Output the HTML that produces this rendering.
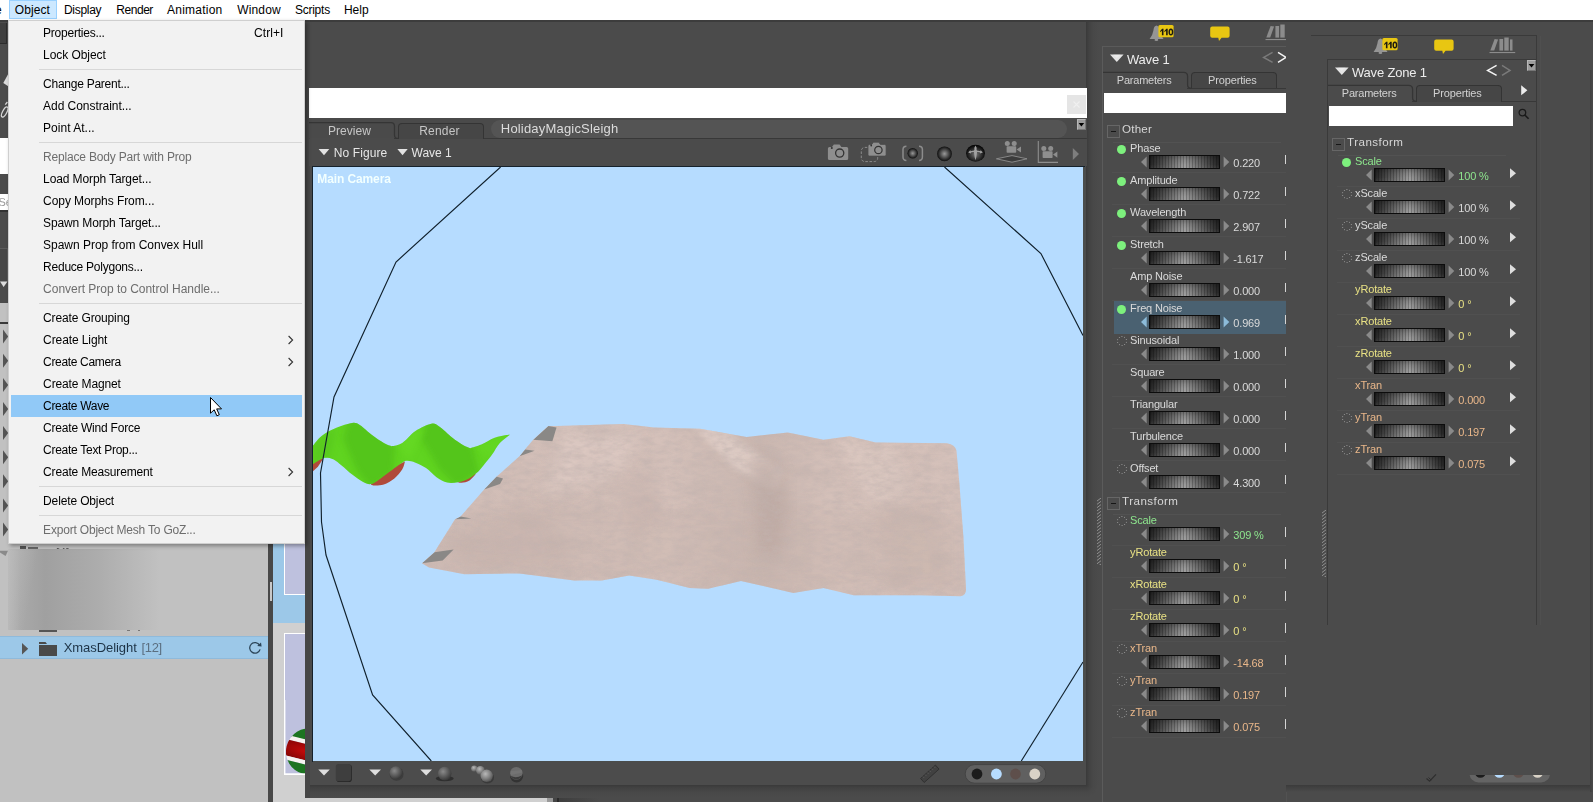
<!DOCTYPE html>
<html><head><meta charset="utf-8"><title>Poser</title>
<style>
html,body{margin:0;padding:0;}
body{width:1593px;height:802px;overflow:hidden;background:#4b4b4b;position:relative;font-family:"Liberation Sans",sans-serif;}
.a{position:absolute;display:block;}
.t{position:absolute;white-space:pre;line-height:1;}
</style></head><body>
<div class="a" style="left:0;top:0;width:1593px;height:802px;will-change:transform;">
<div class="a" style="left:0px;top:22.5px;width:7.2px;height:21.7px;background:#3e3e3e;box-sizing:border-box;border-right:1px solid #2c2c2c;border-bottom:1px solid #2c2c2c;"></div>
<svg class="a" style="left:0px;top:70px;" width="9" height="50" viewBox="0 0 9 50"><polygon points="8.2,4.1 3.3,13 8.2,16.2" fill="#dcdcdc"/><path d="M5.3 34.6 L7.4 32" stroke="#d8d8d8" stroke-width="1.3" fill="none"/><ellipse cx="4.7" cy="42" rx="2.1" ry="5.6" transform="rotate(28 4.7 42)" stroke="#d8d8d8" stroke-width="1.3" fill="none"/></svg>
<div class="a" style="left:0px;top:138px;width:9px;height:36px;background:#ffffff;"></div>
<div class="a" style="left:0px;top:194px;width:9px;height:16px;background:#ffffff;"></div>
<span class="t" style="left:-1.50px;top:196.69px;font-size:11px;color:#9a9a9a;">Se</span>
<div class="a" style="left:0px;top:210px;width:9px;height:2px;background:#333;"></div>
<div class="a" style="left:0px;top:247.7px;width:7.6px;height:33.2px;background:#474747;box-sizing:border-box;border-right:1px solid #5c5c5c;border-top:1px solid #5c5c5c;"></div>
<svg class="a" style="left:0px;top:280px;" width="9" height="9" viewBox="0 0 9 9"><polygon points="0,1.6 7.5,1.6 3.6,7" fill="#dcdcdc"/></svg>
<div class="a" style="left:0px;top:303px;width:9px;height:499px;background:#c1c1c1;"></div>
<div class="a" style="left:0px;top:322px;width:9px;height:2px;background:#3a3a3a;"></div>
<svg class="a" style="left:0px;top:303px;" width="9" height="499" viewBox="0 0 9 499"><polygon points="3,26.5 8.2,33.5 3,40.5" fill="#555"/><polygon points="3,50.7 8.2,57.7 3,64.7" fill="#555"/><polygon points="3,75 8.2,82 3,89" fill="#555"/><polygon points="3,99 8.2,106 3,113" fill="#555"/><polygon points="3,123 8.2,130 3,137" fill="#555"/><polygon points="3,147.2 8.2,154.2 3,161.2" fill="#555"/><polygon points="3,171.3 8.2,178.3 3,185.3" fill="#555"/><polygon points="3,195.4 8.2,202.4 3,209.4" fill="#555"/><polygon points="3,219.5 8.2,226.5 3,233.5" fill="#555"/></svg>
<div class="a" style="left:0px;top:543px;width:268px;height:259px;background:#c1c1c1;"></div>
<div class="a" style="left:20px;top:546.3px;width:6px;height:3px;background:#555;"></div>
<div class="a" style="left:28px;top:547.4px;width:9.5px;height:1.8px;background:#666;"></div>
<span class="t" style="left:56.00px;top:546.84px;font-size:12px;color:#555;">[4]</span>
<svg class="a" style="left:0px;top:548px;" width="9" height="10" viewBox="0 0 9 10"><polygon points="0,2.7 8,2.7 5.6,8 0,4.6" fill="#8a8a8a"/></svg>
<div class="a" style="left:39px;top:629.6px;width:18.2px;height:2.2px;background:#555;"></div>
<div class="a" style="left:127px;top:629.8px;width:2.6px;height:1.6px;background:#777;"></div>
<div class="a" style="left:137.5px;top:629.8px;width:2.6px;height:1.6px;background:#777;"></div>
<div class="a" style="left:8.2px;top:549px;width:160px;height:80.8px;background:linear-gradient(90deg,#b6b6b6 0px,#a9a9a9 12px,#a0a0a0 37px,#a7a7a7 67px,#adadad 92px,#b7b7b7 122px,#c1c1c1 152px);"></div>
<div class="a" style="left:8.2px;top:549px;width:160px;height:80.8px;background:linear-gradient(100deg,rgba(193,193,193,.5) 0px,rgba(193,193,193,0) 30px);"></div>
<div class="a" style="left:0px;top:636px;width:268px;height:23px;background:#9cc8e8;box-sizing:border-box;border-top:1px solid #8fbadb;border-bottom:1px solid #8fbadb;"></div>
<svg class="a" style="left:20px;top:641px;" width="12" height="16" viewBox="0 0 12 16"><polygon points="2,2 8.2,7.7 2,13.4" fill="#565656"/></svg>
<svg class="a" style="left:38px;top:640px;" width="22" height="18" viewBox="0 0 22 18"><path d="M1 2 h6.5 l1.5 2 h-8 z M1 5 h18 v11 h-18 z" fill="#4a4a4a"/></svg>
<span class="t" style="left:63.70px;top:641.00px;font-size:13px;color:#1d3346;letter-spacing:-0.064px;">XmasDelight</span>
<span class="t" style="left:141.50px;top:641.00px;font-size:13px;color:#5b6f80;letter-spacing:-0.321px;">[12]</span>
<svg class="a" style="left:246px;top:639px;" width="18" height="18" viewBox="0 0 18 18"><path d="M13.6 6.2 A5.3 5.3 0 1 0 14.1 10.4" stroke="#2c4558" stroke-width="1.3" fill="none"/><polygon points="11.2,6.9 15.6,7.6 15.0,3.4" fill="#2c4558"/></svg>
<div class="a" style="left:268px;top:543px;width:5px;height:259px;background:#484848;"></div>
<div class="a" style="left:270px;top:582px;width:1.5px;height:19px;background:#c8c8c8;"></div>
<div class="a" style="left:273px;top:543px;width:32px;height:259px;background:#d0d0d0;"></div>
<div class="a" style="left:273px;top:543px;width:32px;height:80px;background:#9cc8e8;"></div>
<div class="a" style="left:284px;top:543px;width:21px;height:51.5px;background:#bec1de;border-left:1px solid #fff;border-bottom:1px solid #fff;box-sizing:border-box;"></div>
<div class="a" style="left:284px;top:633px;width:21px;height:142px;background:#bec1de;border:1.4px solid #fff;border-right:none;box-sizing:border-box;"></div>
<svg class="a" style="left:284px;top:700px;" width="21" height="75" viewBox="0 0 21 75"><defs><clipPath id="orn"><ellipse cx="0" cy="0" rx="22.5" ry="23"/></clipPath><radialGradient id="orng" cx="45%" cy="45%" r="60%"><stop offset="0" stop-color="#c40a0a"/><stop offset="1" stop-color="#8a0606"/></radialGradient></defs><g transform="translate(24.5,51.5) rotate(14)"><g clip-path="url(#orn)"><rect x="-24" y="-24" width="48" height="14" fill="#1c7420"/><rect x="-24" y="-11" width="48" height="4.4" fill="#f6f2f0"/><rect x="-24" y="-6.6" width="48" height="16" fill="url(#orng)"/><rect x="-24" y="9.4" width="48" height="4" fill="#f6f2f0"/><rect x="-24" y="13.4" width="48" height="12" fill="#1c7420"/></g></g><rect x="0" y="0" width="1.4" height="75" fill="#fff"/><rect x="0" y="73.3" width="21" height="1.7" fill="#fff"/></svg>
<div class="a" style="left:305px;top:797px;width:242px;height:5px;background:#d0d0d0;"></div>
<div class="a" style="left:547px;top:797px;width:6px;height:5px;background:#9a9a9a;"></div>
<div class="a" style="left:553px;top:797px;width:4px;height:5px;background:#444;"></div>
<div class="a" style="left:557px;top:797px;width:2px;height:5px;background:#2a2a2a;"></div>
<div class="a" style="left:559px;top:797px;width:40px;height:5px;background:linear-gradient(90deg,#3e3e3e,#4b4b4b);"></div>
<div class="a" style="left:305px;top:22px;width:4.6px;height:775.6px;background:#464646;"></div>
<div class="a" style="left:1086.3px;top:22px;width:13px;height:764px;background:linear-gradient(90deg,#3a3a3a 0,#424242 3px,#484848 7px,#4b4b4b 13px);"></div>
<div class="a" style="left:309.6px;top:784.8px;width:776.7px;height:12.8px;background:linear-gradient(180deg,#3a3a3a 0,#424242 3px,#484848 7px,#4b4b4b 12px);"></div>
<div class="a" style="left:1086.3px;top:784.8px;width:12px;height:12px;background:radial-gradient(circle at 0 0,#3a3a3a 0,#424242 3px,#484848 7px,#4b4b4b 12px);"></div>
<div class="a" style="left:309px;top:88px;width:778px;height:30px;background:#ffffff;"></div>
<div class="a" style="left:1067px;top:95px;width:19px;height:19px;background:#e5e5e5;"></div>
<svg class="a" style="left:1067px;top:95px;" width="19" height="19" viewBox="0 0 19 19"><path d="M6.5 6.5 L12.5 12.5 M12.5 6.5 L6.5 12.5" stroke="#f0f0f0" stroke-width="1.1"/></svg>
<div class="a" style="left:309px;top:118px;width:778px;height:20px;background:#4a4a4a;"></div>
<div class="a" style="left:490.5px;top:120px;width:576px;height:17.5px;background:#545454;border-radius:9px;"></div>
<span class="t" style="left:500.80px;top:122.00px;font-size:13px;color:#dcdcdc;letter-spacing:0.190px;">HolidayMagicSleigh</span>
<div class="a" style="left:394px;top:138px;width:692px;height:1px;background:#383838;"></div>
<svg class="a" style="left:309px;top:120px;" width="90" height="20" viewBox="0 0 90 20"><path d="M0 2.6 H82 Q85.5 2.6 85.5 6.2 V15 Q85.5 18.5 89 18.5" fill="none" stroke="#353535" stroke-width="1.3"/></svg>
<span class="t" style="left:327.90px;top:124.84px;font-size:12px;color:#c6c6c6;letter-spacing:0.046px;">Preview</span>
<div class="a" style="left:398px;top:122.5px;width:86px;height:16px;background:#464646;box-sizing:border-box;border:1px solid #343434;border-bottom:none;border-radius:4px 4px 0 0;"></div>
<span class="t" style="left:419.20px;top:124.84px;font-size:12px;color:#c6c6c6;letter-spacing:0.190px;">Render</span>
<div class="a" style="left:1077px;top:119px;width:8.5px;height:10.5px;background:#9c9c9c;box-sizing:border-box;border:1px solid #b8b8b8;border-right-color:#777;border-bottom-color:#777;"></div>
<svg class="a" style="left:1077px;top:119px;" width="9" height="11" viewBox="0 0 9 11"><polygon points="1.6,4 7.2,4 4.4,7.6" fill="#000"/></svg>
<div class="a" style="left:309px;top:139px;width:778px;height:27px;background:#4b4b4b;"></div>
<svg class="a" style="left:316px;top:145px;" width="16" height="14" viewBox="0 0 16 14"><polygon points="2.6,4 13.3,4 8,10.2" fill="#e2e2e2"/></svg>
<span class="t" style="left:333.80px;top:146.84px;font-size:12px;color:#e6e6e6;letter-spacing:0.090px;">No Figure</span>
<svg class="a" style="left:395px;top:145px;" width="16" height="14" viewBox="0 0 16 14"><polygon points="2.4,4 12.7,4 7.5,10.2" fill="#e2e2e2"/></svg>
<span class="t" style="left:411.60px;top:146.84px;font-size:12px;color:#e6e6e6;letter-spacing:-0.039px;">Wave 1</span>
<svg class="a" style="left:820px;top:139px;" width="266" height="27" viewBox="0 0 266 27">
<defs>
<radialGradient id="sph" cx="50%" cy="50%" r="50%"><stop offset="0" stop-color="#9a9a9a"/><stop offset=".45" stop-color="#5a5a5a"/><stop offset="1" stop-color="#0e0e0e"/></radialGradient>
<radialGradient id="sph2" cx="50%" cy="55%" r="52%"><stop offset="0" stop-color="#7a7a7a"/><stop offset=".5" stop-color="#3c3c3c"/><stop offset="1" stop-color="#060606"/></radialGradient>
<filter id="icb"><feGaussianBlur stdDeviation="0.35"/></filter>
</defs>
<!-- camera 1 -->
<g fill="#8e8e8e">
<path d="M9.5 8 H12 L13.8 5.6 H19.6 L21.4 8 H26.6 Q28.2 8 28.2 9.6 V19.4 Q28.2 21 26.6 21 H9.5 Q7.9 21 7.9 19.4 V9.6 Q7.9 8 9.5 8 Z"/>
</g>
<circle cx="19.7" cy="14.1" r="4.1" fill="#8e8e8e" stroke="#333" stroke-width="1.3"/>
<circle cx="11.8" cy="9.1" r="1" fill="#333"/>
<!-- camera 2 w/ dashed -->
<rect x="41.3" y="8.4" width="16.4" height="14.2" rx="3.5" fill="none" stroke="#8a8a8a" stroke-width="1" stroke-dasharray="2.6 1.6"/>
<path d="M49.5 5.4 H51.8 L53.4 3.2 H58.8 L60.4 5.4 H64.6 Q66.1 5.4 66.1 6.9 V15.6 Q66.1 17.1 64.6 17.1 H49.5 Q48 17.1 48 15.6 V6.9 Q48 5.4 49.5 5.4 Z" fill="#8e8e8e" stroke="#4b4b4b" stroke-width=".8"/>
<circle cx="58.4" cy="11" r="3.7" fill="#8e8e8e" stroke="#333" stroke-width="1.2"/>
<circle cx="51.2" cy="6.5" r=".9" fill="#333"/>
<!-- bracket sphere -->
<path d="M86.4 7.2 Q83 7.2 83 10.5 V18 Q83 21.4 86.4 21.4" fill="none" stroke="#8c8c8c" stroke-width="1.5"/>
<path d="M99 7.2 Q102.4 7.2 102.4 10.5 V18 Q102.4 21.4 99 21.4" fill="none" stroke="#8c8c8c" stroke-width="1.5"/>
<circle cx="92.7" cy="14.3" r="5.2" fill="url(#sph)"/>
<!-- sphere -->
<circle cx="124.5" cy="14.8" r="7.4" fill="url(#sph)"/>
<!-- sphere with arrows -->
<ellipse cx="155.5" cy="14.3" rx="9.5" ry="8.5" fill="url(#sph2)"/>
<g fill="#a2a2a2" filter="url(#icb)">
<path d="M155.5 6.6 L157 9.4 L156.3 9.4 Q157.2 12 157 13.4 Q156.6 17.6 155.5 21.2 Q154.4 17.6 154 13.4 Q153.8 12 154.7 9.4 L154 9.4 Z"/>
<path d="M148.2 13.6 L150.6 11 L150.4 12.2 Q155.5 10.6 160.6 12.2 L160.4 11 L162.8 13.6 L159.8 14.4 L160.2 13.4 Q155.5 12.2 150.8 13.4 L151.2 14.4 Z"/>
</g>
<!-- movie camera over diamond -->
<g fill="#8e8e8e">
<circle cx="187.3" cy="4.6" r="2.5"/><circle cx="194.2" cy="4.6" r="2.5"/>
<rect x="186.6" y="7.2" width="9.6" height="6.6" rx=".8"/>
<polygon points="196.6,10.5 201,7.4 201,13.6"/>
</g>
<polygon points="176.4,19.8 192,16.6 207,19.8 192,23.2" fill="#3c3c3c" stroke="#8e8e8e" stroke-width=".9"/>
<!-- L + movie camera -->
<path d="M218.3 2 V23.4 H238" fill="none" stroke="#8e8e8e" stroke-width="1.1"/>
<g fill="#8e8e8e">
<circle cx="223.8" cy="9.6" r="2.5"/><circle cx="230.7" cy="9.6" r="2.5"/>
<rect x="222.6" y="12.2" width="10" height="6.8" rx=".8"/>
<polygon points="233,15.6 237.4,12.4 237.4,18.8"/>
</g>
<!-- right arrow -->
<polygon points="252.8,9 259,15 252.8,21" fill="#7e7e7e"/>
</svg>
<div class="a" style="left:311.5px;top:165.5px;width:773px;height:597px;background:#4a4d4c;box-sizing:border-box;border-top:1.4px solid #16222c;border-left:1.4px solid #16222c;"></div>
<svg class="a" style="left:313px;top:167px;" width="770" height="594" viewBox="0 0 770 594">
<defs>
<linearGradient id="tg" x1="0" y1="0" x2="1" y2="0">
 <stop offset="0" stop-color="#d0bcb5"/><stop offset=".45" stop-color="#d5c1ba"/><stop offset=".62" stop-color="#c9b6af"/><stop offset=".75" stop-color="#d4c0b9"/><stop offset="1" stop-color="#d5c1ba"/>
</linearGradient>
<linearGradient id="gg" x1="0" y1="0" x2="0" y2="1"><stop offset="0" stop-color="#66dc22"/><stop offset="1" stop-color="#4fbf18"/></linearGradient>
<filter id="bl" x="-20%" y="-20%" width="140%" height="140%"><feGaussianBlur stdDeviation="7"/></filter>
<filter id="bl2" x="-20%" y="-20%" width="140%" height="140%"><feGaussianBlur stdDeviation="3"/></filter>
<filter id="tex" x="0" y="0" width="100%" height="100%">
 <feTurbulence type="fractalNoise" baseFrequency="0.1 0.24" numOctaves="3" seed="7" result="n"/>
 <feColorMatrix in="n" type="matrix" values="0 0 0 0 0.55  0 0 0 0 0.46  0 0 0 0 0.44  1.4 1.4 0 0 -1.15"/>
 <feComposite in2="SourceGraphic" operator="in"/>
</filter>
<filter id="tex2" x="0" y="0" width="100%" height="100%">
 <feTurbulence type="fractalNoise" baseFrequency="0.03 0.07" numOctaves="2" seed="3" result="n"/>
 <feColorMatrix in="n" type="matrix" values="0 0 0 0 0.5  0 0 0 0 0.42  0 0 0 0 0.4  1.6 1.6 0 0 -1.45"/>
 <feComposite in2="SourceGraphic" operator="in"/>
</filter>
<clipPath id="tc"><path id="tp" d="M235.3 259 L243.5 259 L310.7 257.1 L341 260.4 L387 261.8 L433.6 270 L474.8 265.4 L510.5 272.8 L536.5 269.2 L562.6 275.5 L634 276.3 Q642 277.5 643.5 283.8 L646.3 315.3 L650.4 370.2 L653 422.3 Q653 428.5 647.6 429.2 L606.5 428.3 L540.6 428.3 L510.5 421 L480.3 425.9 L428 414 L395.2 421.8 L376.6 421 L343.7 412.7 L316.2 408.6 L288.8 413.5 L261.3 413.5 L206.5 406.4 L151.6 407.2 L116 400.4 L109 396.2 L121.4 385.3 L142 352.3 L147.5 349.6 L171.4 322.2 L184 309.3 L206.5 289.2 L212 282.4 L220.2 272.8 Z"/></clipPath>
</defs>
<rect width="770" height="594" fill="#b6dcff"/>
<!-- green wave -->
<path d="M0 304.3 L4.9 299.7 L10.2 291.8 L5 291 L0 295 Z" fill="#b04a3a"/>
<path d="M57.6 317.1 C58.0 317.3 58.1 318.3 60.3 318.4 C62.5 318.5 67.3 318.6 70.8 317.5 C74.3 316.4 78.3 314.0 81.4 311.5 C84.5 309.0 87.5 305.1 89.3 302.3 C91.1 299.5 91.5 295.8 92.0 294.5 L80 300 Z" fill="#b04a3a"/>
<path d="M144.6 315.2 C145.3 315.3 146.6 316.1 148.6 315.8 C150.6 315.5 154.0 315.1 156.5 313.5 C159.0 311.9 162.2 307.5 163.4 306.3 L155 309 Z" fill="#b04a3a"/>
<clipPath id="wc"><path id="wp" d="M0.0 278.6 C1.5 277.0 5.0 271.7 8.9 268.7 C12.8 265.7 18.3 262.9 23.4 260.8 C28.4 258.7 35.2 256.3 39.2 255.9 C43.2 255.5 43.8 256.2 47.1 258.2 C50.4 260.2 55.0 265.0 59.0 268.0 C63.0 271.0 67.5 274.1 70.8 276.0 C74.1 277.9 77.4 278.8 78.7 279.3 C80.5 278.8 85.3 278.5 89.3 276.0 C93.3 273.5 97.7 267.3 102.5 264.1 C107.3 260.9 114.3 257.6 118.3 256.8 C122.2 256.0 122.7 257.2 126.2 259.5 C129.7 261.8 135.5 267.6 139.4 270.7 C143.3 273.8 146.9 276.1 149.9 277.9 C152.9 279.6 156.0 280.6 157.2 281.2 C159.1 280.6 164.3 279.2 168.4 277.5 C172.5 275.8 176.8 272.4 181.6 270.7 C186.4 269.0 194.8 267.9 197.4 267.4 C195.6 268.8 189.9 272.6 186.8 276.0 C183.7 279.4 182.0 283.6 178.9 287.8 C175.8 292.0 171.0 297.9 168.4 301.0 C165.8 304.1 165.3 304.5 163.1 306.3 C160.9 308.1 158.1 310.5 155.0 312.0 C151.9 313.5 148.1 314.6 144.6 315.2 C141.1 315.8 137.6 316.3 134.1 315.5 C130.6 314.7 127.0 312.6 123.5 310.2 C120.0 307.8 116.5 303.4 113.0 301.0 C109.5 298.6 105.6 296.9 102.5 295.7 C99.4 294.5 96.7 293.8 94.5 293.8 C92.3 293.8 92.4 293.8 89.3 295.7 C86.2 297.6 80.1 302.1 76.1 305.0 C72.1 307.9 68.6 310.9 65.5 312.9 C62.4 314.9 60.2 316.8 57.6 317.1 C55.0 317.4 52.8 316.4 49.7 314.8 C46.6 313.2 42.7 310.3 39.2 307.6 C35.7 304.9 31.7 300.9 28.6 298.4 C25.5 295.9 23.3 293.7 20.7 292.4 C18.1 291.1 15.0 290.7 12.8 290.7 C10.6 290.7 9.6 291.3 7.5 292.4 C5.4 293.4 1.2 296.2 0.0 297.0 Z"/></clipPath>
<use href="#wp" fill="#60d420"/>
<g clip-path="url(#wc)">
 <path d="M36 250 L50 256 L82 279 L80 306 L58 322 L44 304 L30 272 Z" fill="#4ab616" opacity=".5" filter="url(#bl2)"/>
 <path d="M115 250 L129 256 L160 281 L166 306 L144 320 L126 302 L108 272 Z" fill="#4ab616" opacity=".5" filter="url(#bl2)"/>
 <path d="M0 276 L24 260 L16 292 L0 300 Z" fill="#52c21a" opacity=".5" filter="url(#bl2)"/>
 <path d="M84 276 L104 262 L112 262 L96 294 Z" fill="#6ade26" opacity=".45" filter="url(#bl2)"/>
 <path d="M162 280 L198 266 L178 292 Z" fill="#6ade26" opacity=".35" filter="url(#bl2)"/>
</g>
<!-- terrain -->
<use href="#tp" fill="url(#tg)"/>
<g clip-path="url(#tc)">
 <path d="M109 396 L300 410 L653 428 L653 350 L400 345 L200 335 Z" fill="#cab6af" opacity=".4" filter="url(#bl)"/>
 <path d="M380 258 L410 262 L470 305 L462 325 L420 300 Z" fill="#e3d1ca" opacity=".8" filter="url(#bl2)"/>
 <path d="M436 290 L466 296 L476 340 L468 390 L442 384 L446 340 Z" fill="#b9a59f" opacity=".6" filter="url(#bl)"/>
 <path d="M250 262 L330 266 L300 310 L230 330 Z" fill="#decbc4" opacity=".7" filter="url(#bl)"/>
 <path d="M300 315 L340 300 L350 350 L320 372 Z" fill="#c4b0aa" opacity=".45" filter="url(#bl)"/>
 <path d="M520 270 L580 278 L600 330 L560 340 Z" fill="#dfccc5" opacity=".55" filter="url(#bl)"/>
 <path d="M560 340 L620 330 L640 420 L580 425 Z" fill="#c7b3ac" opacity=".45" filter="url(#bl)"/>
 <path d="M130 370 L230 340 L260 400 L150 404 Z" fill="#c5b1aa" opacity=".45" filter="url(#bl)"/>
 <rect x="100" y="250" width="560" height="185" fill="#fff" filter="url(#tex)" opacity=".6"/>
 <rect x="100" y="250" width="560" height="185" fill="#fff" filter="url(#tex2)" opacity=".3"/>
 <!-- grey edge bits -->
 <path d="M235.3 259 L243.5 260.4 L239.4 274.2 L220.2 272.8 Z" fill="#8a8886"/>
 <path d="M206.5 289.2 L212 282.4 L221.6 283.8 Z" fill="#8a8886"/>
 <path d="M171 322.4 L183 309.5 L190 311.5 L187 317 Z" fill="#8a8886"/>
 <path d="M142 352.3 L147.5 349.6 L158.5 351.5 Z" fill="#8a8886"/>
 <path d="M109 396.2 L121.4 385.3 L140.6 382.5 L129.7 393.5 Z" fill="#8a8886"/>
</g>
<!-- camera frustum polyline -->
<polyline points="187.6,0 83,95 21,230 7.5,306 8.5,355 13,388 59.6,528 118.3,594" fill="none" stroke="#10202c" stroke-width="1.15"/>
<polyline points="631.5,0 727.9,86.5 770,168.4" fill="none" stroke="#10202c" stroke-width="1.15"/>
<polyline points="770,495 708.3,594" fill="none" stroke="#10202c" stroke-width="1.15"/>
</svg>
<span class="t" style="left:317.30px;top:172.84px;font-size:12px;color:#f2ffff;letter-spacing:-0.109px;font-weight:bold;">Main Camera</span>
<div class="a" style="left:309.5px;top:761.5px;width:776.8px;height:23.3px;background:#4c4c4c;"></div>
<svg class="a" style="left:309px;top:761.5px;" width="777" height="23.5" viewBox="0 0 777 23.5">
<defs>
<radialGradient id="bs" cx="38%" cy="35%" r="65%"><stop offset="0" stop-color="#8a8a8a"/><stop offset=".6" stop-color="#5a5a5a"/><stop offset="1" stop-color="#3a3a3a"/></radialGradient>
<radialGradient id="bs2" cx="40%" cy="35%" r="65%"><stop offset="0" stop-color="#b8b8b8"/><stop offset=".6" stop-color="#808080"/><stop offset="1" stop-color="#555"/></radialGradient>
</defs>
<polygon points="9.3,7.5 20.8,7.5 15,13.6" fill="#dedede"/>
<rect x="27.4" y="2.6" width="15.4" height="17.4" rx="2.8" fill="#262626"/><rect x="26.8" y="2" width="15.2" height="17.2" rx="2.6" fill="#3e3e3e"/>
<polygon points="60.3,7.5 72,7.5 66.2,13.6" fill="#dedede"/>
<ellipse cx="87.6" cy="12" rx="7" ry="6.8" fill="#3c3c3c"/>
<circle cx="87" cy="10.8" r="6.5" fill="url(#bs)"/>
<polygon points="111.3,7.5 123,7.5 117.2,13.6" fill="#dedede"/>
<ellipse cx="135.7" cy="16.6" rx="9" ry="2.6" fill="#2e2e2e"/>
<circle cx="135.7" cy="11.6" r="6.8" fill="url(#bs)"/>
<circle cx="165.3" cy="6.6" r="3.2" fill="url(#bs2)"/>
<circle cx="171.4" cy="8.3" r="4.4" fill="url(#bs2)"/>
<ellipse cx="178.4" cy="15.5" rx="6.6" ry="6" fill="#3a3a3a"/>
<circle cx="177.7" cy="13.8" r="6.2" fill="url(#bs2)"/>
<ellipse cx="207.6" cy="14" rx="6.6" ry="6.4" fill="#333"/>
<circle cx="207.3" cy="11.2" r="6.3" fill="#6c6c6c"/>
<path d="M201.6 13.8 A6.3 6.3 0 0 0 213.2 13.2 Q207 17 201.6 13.8 Z" fill="#3c3c3c"/><path d="M202 9 L212.6 8 L213.4 10.6 L202 13 Z" fill="#7a7a7a" opacity=".6"/>
<!-- ruler -->
<g transform="translate(620.8,11.8) rotate(-42)"><rect x="-10" y="-2.7" width="20" height="5.4" fill="#414141" stroke="#303030" stroke-width=".9"/><path d="M-7 -2.6 v2 M-4 -2.6 v2 M-1 -2.6 v2 M2 -2.6 v2 M5 -2.6 v2 M8 -2.6 v2" stroke="#5a5a5a" stroke-width=".8"/></g>
<!-- colour pill -->
<rect x="656.2" y="2.6" width="80.6" height="18.6" rx="9.3" fill="#606060" stroke="#444" stroke-width="1"/>
<circle cx="668" cy="12" r="5.4" fill="#1c1c1c"/>
<circle cx="687.4" cy="12" r="5.4" fill="#b6dcff"/>
<circle cx="706.5" cy="12" r="5.4" fill="#5e4f4b"/>
<circle cx="725.8" cy="12" r="5.4" fill="#d9d2c6"/>
</svg>
<div class="a" style="left:0;top:0;width:1286.2px;height:802px;overflow:hidden;">
<div class="a" style="left:1101.8px;top:46px;width:1.1px;height:756px;background:#5b5b5b;"></div>
<svg class="a" style="left:1144.5px;top:23.8px;" width="150" height="20" viewBox="0 0 150 20">
<path d="M4.6 14.9 Q7.4 12 8.4 6.4 Q9 1.8 11.5 1.5 Q14 1.8 14.6 6.4 Q15.6 12 18.5 14.9 Z" fill="#959595"/>
<ellipse cx="11.4" cy="15.9" rx="1.9" ry="1.1" fill="#959595"/>
<rect x="13.4" y="0.9" width="15.2" height="12.3" rx="1.5" fill="#e8c612"/>
<g fill="#1c1a10">
<path d="M15.2 7 L17.1 4.7 H18.5 V11.3 H16.9 V6.8 L15.2 8.3 Z"/>
<path d="M19.4 7 L21.3 4.7 H22.7 V11.3 H21.1 V6.8 L19.4 8.3 Z"/>
<path fill-rule="evenodd" d="M25.9 4.6 C27.5 4.6 28.3 5.9 28.3 8 C28.3 10.1 27.5 11.4 25.9 11.4 C24.3 11.4 23.5 10.1 23.5 8 C23.5 5.9 24.3 4.6 25.9 4.6 Z M25.9 5.9 C25.2 5.9 25 6.7 25 8 C25 9.3 25.2 10.1 25.9 10.1 C26.6 10.1 26.8 9.3 26.8 8 C26.8 6.7 26.6 5.9 25.9 5.9 Z"/>
</g>
<path d="M67.2 2.5 H82.6 Q84.6 2.5 84.6 4.5 V11.8 Q84.6 13.8 82.6 13.8 H76.6 L74 16.9 L73.3 13.8 H67.2 Q65.2 13.8 65.2 11.8 V4.5 Q65.2 2.5 67.2 2.5 Z" fill="#e8c612"/>
<g fill="#8c8c8c">
<polygon points="121.3,13.6 125.6,2 129.1,2.6 125.2,13.6"/>
<rect x="130.4" y="2" width="3.7" height="11.6"/>
<rect x="135.3" y="0.5" width="4.4" height="13.1"/>
<rect x="141" y="2.4" width="2.5" height="11.2"/>
<rect x="120.5" y="15" width="25.7" height="1.1"/>
</g>
</svg>
<div class="a" style="left:1102.5px;top:46px;width:190px;height:1.2px;background:#5a5a5a;"></div>
<svg class="a" style="left:1108px;top:52px;" width="18" height="12" viewBox="0 0 18 12"><polygon points="2,2.4 15.6,2.4 8.8,10" fill="#e4e4e4"/><polygon points="5,2.4 12.6,2.4 8.8,6" fill="#fff" opacity=".3"/></svg>
<span class="t" style="left:1126.90px;top:52.70px;font-size:13px;color:#ececec;letter-spacing:-0.17px;">Wave 1</span>
<svg class="a" style="left:1260px;top:50px;" width="30" height="15" viewBox="0 0 30 15"><polyline points="12.6,2.4 3.6,7.4 12.6,12.4" fill="none" stroke="#7a7a7a" stroke-width="1.5"/><polyline points="18,2.4 26,7.4 18,12.4" fill="none" stroke="#f4f4f4" stroke-width="1.5"/></svg>
<div class="a" style="left:1102.5px;top:88px;width:190px;height:1px;background:#383838;"></div>
<svg class="a" style="left:1102.5px;top:70px;" width="92" height="21" viewBox="0 0 92 21"><rect x="0" y="2.6" width="84" height="16.4" fill="#4b4b4b"/><rect x="84" y="12" width="2" height="6" fill="#4b4b4b"/><path d="M0 2.3 H80.6 Q84.6 2.3 84.6 6.3 V15 Q84.6 18.4 88.4 18.4" fill="none" stroke="#353535" stroke-width="1.3"/></svg>
<span class="t" style="left:1116.80px;top:74.69px;font-size:11px;color:#d2d2d2;letter-spacing:-0.216px;">Parameters</span>
<div class="a" style="left:1191px;top:71.8px;width:85.5px;height:16.7px;background:#464646;box-sizing:border-box;border:1px solid #343434;border-bottom:none;border-radius:4px 4px 0 0;"></div>
<span class="t" style="left:1208.10px;top:74.69px;font-size:11px;color:#d2d2d2;letter-spacing:-0.164px;">Properties</span>
<div class="a" style="left:1103.8px;top:93px;width:184px;height:20px;background:#ffffff;"></div>
<div class="a" style="left:1107px;top:125.2px;width:12.9px;height:12.4px;background:#4b4b4b;box-sizing:border-box;border:1px solid #666;"></div>
<div class="a" style="left:1111px;top:131.1px;width:5.2px;height:1.2px;background:#161616;"></div>
<span class="t" style="left:1122.10px;top:122.98px;font-size:11.6px;color:#d6d6d6;letter-spacing:0.178px;">Other</span>
<div class="a" style="left:1113px;top:142px;width:168px;height:1px;background:#525252;"></div>
<div class="a" style="left:1116.6px;top:144.5px;width:9.6px;height:9.6px;border-radius:50%;background:#7df07d;"></div>
<span class="t" style="left:1130.10px;top:142.79px;font-size:11px;color:#dadada;letter-spacing:-0.17px;">Phase</span>
<svg class="a" style="left:1139.5px;top:154px" width="92" height="16" viewBox="0 0 92 16"><polygon points="1,8 6.7,2.6 6.7,13.4" fill="#8a8a8a"/><polygon points="83.6,2.6 89.3,8 83.6,13.4" fill="#8a8a8a"/></svg><div class="a" style="left:1148.5px;top:155px;width:71.6px;height:14px;box-sizing:border-box;border:1px solid #0c0c0c;background:repeating-linear-gradient(90deg,rgba(0,0,0,.22) 0,rgba(0,0,0,.22) 1px,rgba(0,0,0,0) 1px,rgba(0,0,0,0) 3px),linear-gradient(180deg,rgba(0,0,0,.28) 0%,rgba(0,0,0,.1) 35%,rgba(0,0,0,0) 70%,rgba(255,255,255,.06) 100%),linear-gradient(90deg,#242424 0%,#3a3a3a 10%,#6a6a6a 30%,#9a9a9a 50%,#6c6c6c 70%,#3a3a3a 90%,#242424 100%);"></div>
<span class="t" style="left:1233.30px;top:157.99px;font-size:11px;color:#dadada;letter-spacing:-0.17px;">0.220</span>
<div class="a" style="left:1285.1px;top:154.8px;width:1.2px;height:9.6px;background:#d4d4d4;"></div>
<div class="a" style="left:1111.5px;top:172.4px;width:183px;height:1px;background:#505050;"></div>
<div class="a" style="left:1116.6px;top:176.5px;width:9.6px;height:9.6px;border-radius:50%;background:#7df07d;"></div>
<span class="t" style="left:1130.10px;top:174.79px;font-size:11px;color:#dadada;letter-spacing:-0.17px;">Amplitude</span>
<svg class="a" style="left:1139.5px;top:186px" width="92" height="16" viewBox="0 0 92 16"><polygon points="1,8 6.7,2.6 6.7,13.4" fill="#8a8a8a"/><polygon points="83.6,2.6 89.3,8 83.6,13.4" fill="#8a8a8a"/></svg><div class="a" style="left:1148.5px;top:187px;width:71.6px;height:14px;box-sizing:border-box;border:1px solid #0c0c0c;background:repeating-linear-gradient(90deg,rgba(0,0,0,.22) 0,rgba(0,0,0,.22) 1px,rgba(0,0,0,0) 1px,rgba(0,0,0,0) 3px),linear-gradient(180deg,rgba(0,0,0,.28) 0%,rgba(0,0,0,.1) 35%,rgba(0,0,0,0) 70%,rgba(255,255,255,.06) 100%),linear-gradient(90deg,#242424 0%,#3a3a3a 10%,#6a6a6a 30%,#9a9a9a 50%,#6c6c6c 70%,#3a3a3a 90%,#242424 100%);"></div>
<span class="t" style="left:1233.30px;top:189.99px;font-size:11px;color:#dadada;letter-spacing:-0.17px;">0.722</span>
<div class="a" style="left:1285.1px;top:186.8px;width:1.2px;height:9.6px;background:#d4d4d4;"></div>
<div class="a" style="left:1111.5px;top:204.4px;width:183px;height:1px;background:#505050;"></div>
<div class="a" style="left:1116.6px;top:208.5px;width:9.6px;height:9.6px;border-radius:50%;background:#7df07d;"></div>
<span class="t" style="left:1130.10px;top:206.79px;font-size:11px;color:#dadada;letter-spacing:-0.17px;">Wavelength</span>
<svg class="a" style="left:1139.5px;top:218px" width="92" height="16" viewBox="0 0 92 16"><polygon points="1,8 6.7,2.6 6.7,13.4" fill="#8a8a8a"/><polygon points="83.6,2.6 89.3,8 83.6,13.4" fill="#8a8a8a"/></svg><div class="a" style="left:1148.5px;top:219px;width:71.6px;height:14px;box-sizing:border-box;border:1px solid #0c0c0c;background:repeating-linear-gradient(90deg,rgba(0,0,0,.22) 0,rgba(0,0,0,.22) 1px,rgba(0,0,0,0) 1px,rgba(0,0,0,0) 3px),linear-gradient(180deg,rgba(0,0,0,.28) 0%,rgba(0,0,0,.1) 35%,rgba(0,0,0,0) 70%,rgba(255,255,255,.06) 100%),linear-gradient(90deg,#242424 0%,#3a3a3a 10%,#6a6a6a 30%,#9a9a9a 50%,#6c6c6c 70%,#3a3a3a 90%,#242424 100%);"></div>
<span class="t" style="left:1233.30px;top:221.99px;font-size:11px;color:#dadada;letter-spacing:-0.17px;">2.907</span>
<div class="a" style="left:1285.1px;top:218.8px;width:1.2px;height:9.6px;background:#d4d4d4;"></div>
<div class="a" style="left:1111.5px;top:236.4px;width:183px;height:1px;background:#505050;"></div>
<div class="a" style="left:1116.6px;top:240.5px;width:9.6px;height:9.6px;border-radius:50%;background:#7df07d;"></div>
<span class="t" style="left:1130.10px;top:238.79px;font-size:11px;color:#dadada;letter-spacing:-0.17px;">Stretch</span>
<svg class="a" style="left:1139.5px;top:250px" width="92" height="16" viewBox="0 0 92 16"><polygon points="1,8 6.7,2.6 6.7,13.4" fill="#8a8a8a"/><polygon points="83.6,2.6 89.3,8 83.6,13.4" fill="#8a8a8a"/></svg><div class="a" style="left:1148.5px;top:251px;width:71.6px;height:14px;box-sizing:border-box;border:1px solid #0c0c0c;background:repeating-linear-gradient(90deg,rgba(0,0,0,.22) 0,rgba(0,0,0,.22) 1px,rgba(0,0,0,0) 1px,rgba(0,0,0,0) 3px),linear-gradient(180deg,rgba(0,0,0,.28) 0%,rgba(0,0,0,.1) 35%,rgba(0,0,0,0) 70%,rgba(255,255,255,.06) 100%),linear-gradient(90deg,#242424 0%,#3a3a3a 10%,#6a6a6a 30%,#9a9a9a 50%,#6c6c6c 70%,#3a3a3a 90%,#242424 100%);"></div>
<span class="t" style="left:1233.30px;top:253.99px;font-size:11px;color:#dadada;letter-spacing:-0.17px;">-1.617</span>
<div class="a" style="left:1285.1px;top:250.8px;width:1.2px;height:9.6px;background:#d4d4d4;"></div>
<div class="a" style="left:1111.5px;top:268.4px;width:183px;height:1px;background:#505050;"></div>

<span class="t" style="left:1130.10px;top:270.79px;font-size:11px;color:#dadada;letter-spacing:-0.17px;">Amp Noise</span>
<svg class="a" style="left:1139.5px;top:282px" width="92" height="16" viewBox="0 0 92 16"><polygon points="1,8 6.7,2.6 6.7,13.4" fill="#8a8a8a"/><polygon points="83.6,2.6 89.3,8 83.6,13.4" fill="#8a8a8a"/></svg><div class="a" style="left:1148.5px;top:283px;width:71.6px;height:14px;box-sizing:border-box;border:1px solid #0c0c0c;background:repeating-linear-gradient(90deg,rgba(0,0,0,.22) 0,rgba(0,0,0,.22) 1px,rgba(0,0,0,0) 1px,rgba(0,0,0,0) 3px),linear-gradient(180deg,rgba(0,0,0,.28) 0%,rgba(0,0,0,.1) 35%,rgba(0,0,0,0) 70%,rgba(255,255,255,.06) 100%),linear-gradient(90deg,#242424 0%,#3a3a3a 10%,#6a6a6a 30%,#9a9a9a 50%,#6c6c6c 70%,#3a3a3a 90%,#242424 100%);"></div>
<span class="t" style="left:1233.30px;top:285.99px;font-size:11px;color:#dadada;letter-spacing:-0.17px;">0.000</span>
<div class="a" style="left:1285.1px;top:282.8px;width:1.2px;height:9.6px;background:#d4d4d4;"></div>
<div class="a" style="left:1111.5px;top:300.4px;width:183px;height:1px;background:#505050;"></div>
<div class="a" style="left:1114.2px;top:300.6px;width:176px;height:33.5px;background:#4a6171;"></div>
<div class="a" style="left:1116.6px;top:304.5px;width:9.6px;height:9.6px;border-radius:50%;background:#7df07d;"></div>
<span class="t" style="left:1130.10px;top:302.79px;font-size:11px;color:#dadada;letter-spacing:-0.17px;">Freq Noise</span>
<svg class="a" style="left:1139.5px;top:314px" width="92" height="16" viewBox="0 0 92 16"><polygon points="1,8 6.7,2.6 6.7,13.4" fill="#8cbbd9"/><polygon points="83.6,2.6 89.3,8 83.6,13.4" fill="#8cbbd9"/></svg><div class="a" style="left:1148.5px;top:315px;width:71.6px;height:14px;box-sizing:border-box;border:1px solid #0c0c0c;background:repeating-linear-gradient(90deg,rgba(0,0,0,.22) 0,rgba(0,0,0,.22) 1px,rgba(0,0,0,0) 1px,rgba(0,0,0,0) 3px),linear-gradient(180deg,rgba(0,0,0,.28) 0%,rgba(0,0,0,.1) 35%,rgba(0,0,0,0) 70%,rgba(255,255,255,.06) 100%),linear-gradient(90deg,#242424 0%,#3a3a3a 10%,#6a6a6a 30%,#9a9a9a 50%,#6c6c6c 70%,#3a3a3a 90%,#242424 100%);"></div>
<span class="t" style="left:1233.30px;top:317.99px;font-size:11px;color:#dadada;letter-spacing:-0.17px;">0.969</span>
<div class="a" style="left:1285.1px;top:314.8px;width:1.2px;height:9.6px;background:#d4d4d4;"></div>
<svg class="a" style="left:1115.9px;top:335px" width="12" height="12" viewBox="0 0 12 12"><g fill="#c8c8c8"><circle cx="10.30" cy="7.33" r="0.48"/><circle cx="8.70" cy="9.60" r="0.48"/><circle cx="6.06" cy="10.50" r="0.48"/><circle cx="3.41" cy="9.68" r="0.48"/><circle cx="1.74" cy="7.45" r="0.48"/><circle cx="1.70" cy="4.67" r="0.48"/><circle cx="3.30" cy="2.40" r="0.48"/><circle cx="5.94" cy="1.50" r="0.48"/><circle cx="8.59" cy="2.32" r="0.48"/><circle cx="10.26" cy="4.55" r="0.48"/></g></svg>
<span class="t" style="left:1130.10px;top:334.79px;font-size:11px;color:#dadada;letter-spacing:-0.17px;">Sinusoidal</span>
<svg class="a" style="left:1139.5px;top:346px" width="92" height="16" viewBox="0 0 92 16"><polygon points="1,8 6.7,2.6 6.7,13.4" fill="#8a8a8a"/><polygon points="83.6,2.6 89.3,8 83.6,13.4" fill="#8a8a8a"/></svg><div class="a" style="left:1148.5px;top:347px;width:71.6px;height:14px;box-sizing:border-box;border:1px solid #0c0c0c;background:repeating-linear-gradient(90deg,rgba(0,0,0,.22) 0,rgba(0,0,0,.22) 1px,rgba(0,0,0,0) 1px,rgba(0,0,0,0) 3px),linear-gradient(180deg,rgba(0,0,0,.28) 0%,rgba(0,0,0,.1) 35%,rgba(0,0,0,0) 70%,rgba(255,255,255,.06) 100%),linear-gradient(90deg,#242424 0%,#3a3a3a 10%,#6a6a6a 30%,#9a9a9a 50%,#6c6c6c 70%,#3a3a3a 90%,#242424 100%);"></div>
<span class="t" style="left:1233.30px;top:349.99px;font-size:11px;color:#dadada;letter-spacing:-0.17px;">1.000</span>
<div class="a" style="left:1285.1px;top:346.8px;width:1.2px;height:9.6px;background:#d4d4d4;"></div>
<div class="a" style="left:1111.5px;top:364.4px;width:183px;height:1px;background:#505050;"></div>

<span class="t" style="left:1130.10px;top:366.79px;font-size:11px;color:#dadada;letter-spacing:-0.17px;">Square</span>
<svg class="a" style="left:1139.5px;top:378px" width="92" height="16" viewBox="0 0 92 16"><polygon points="1,8 6.7,2.6 6.7,13.4" fill="#8a8a8a"/><polygon points="83.6,2.6 89.3,8 83.6,13.4" fill="#8a8a8a"/></svg><div class="a" style="left:1148.5px;top:379px;width:71.6px;height:14px;box-sizing:border-box;border:1px solid #0c0c0c;background:repeating-linear-gradient(90deg,rgba(0,0,0,.22) 0,rgba(0,0,0,.22) 1px,rgba(0,0,0,0) 1px,rgba(0,0,0,0) 3px),linear-gradient(180deg,rgba(0,0,0,.28) 0%,rgba(0,0,0,.1) 35%,rgba(0,0,0,0) 70%,rgba(255,255,255,.06) 100%),linear-gradient(90deg,#242424 0%,#3a3a3a 10%,#6a6a6a 30%,#9a9a9a 50%,#6c6c6c 70%,#3a3a3a 90%,#242424 100%);"></div>
<span class="t" style="left:1233.30px;top:381.99px;font-size:11px;color:#dadada;letter-spacing:-0.17px;">0.000</span>
<div class="a" style="left:1285.1px;top:378.8px;width:1.2px;height:9.6px;background:#d4d4d4;"></div>
<div class="a" style="left:1111.5px;top:396.4px;width:183px;height:1px;background:#505050;"></div>

<span class="t" style="left:1130.10px;top:398.79px;font-size:11px;color:#dadada;letter-spacing:-0.17px;">Triangular</span>
<svg class="a" style="left:1139.5px;top:410px" width="92" height="16" viewBox="0 0 92 16"><polygon points="1,8 6.7,2.6 6.7,13.4" fill="#8a8a8a"/><polygon points="83.6,2.6 89.3,8 83.6,13.4" fill="#8a8a8a"/></svg><div class="a" style="left:1148.5px;top:411px;width:71.6px;height:14px;box-sizing:border-box;border:1px solid #0c0c0c;background:repeating-linear-gradient(90deg,rgba(0,0,0,.22) 0,rgba(0,0,0,.22) 1px,rgba(0,0,0,0) 1px,rgba(0,0,0,0) 3px),linear-gradient(180deg,rgba(0,0,0,.28) 0%,rgba(0,0,0,.1) 35%,rgba(0,0,0,0) 70%,rgba(255,255,255,.06) 100%),linear-gradient(90deg,#242424 0%,#3a3a3a 10%,#6a6a6a 30%,#9a9a9a 50%,#6c6c6c 70%,#3a3a3a 90%,#242424 100%);"></div>
<span class="t" style="left:1233.30px;top:413.99px;font-size:11px;color:#dadada;letter-spacing:-0.17px;">0.000</span>
<div class="a" style="left:1285.1px;top:410.8px;width:1.2px;height:9.6px;background:#d4d4d4;"></div>
<div class="a" style="left:1111.5px;top:428.4px;width:183px;height:1px;background:#505050;"></div>

<span class="t" style="left:1130.10px;top:430.79px;font-size:11px;color:#dadada;letter-spacing:-0.17px;">Turbulence</span>
<svg class="a" style="left:1139.5px;top:442px" width="92" height="16" viewBox="0 0 92 16"><polygon points="1,8 6.7,2.6 6.7,13.4" fill="#8a8a8a"/><polygon points="83.6,2.6 89.3,8 83.6,13.4" fill="#8a8a8a"/></svg><div class="a" style="left:1148.5px;top:443px;width:71.6px;height:14px;box-sizing:border-box;border:1px solid #0c0c0c;background:repeating-linear-gradient(90deg,rgba(0,0,0,.22) 0,rgba(0,0,0,.22) 1px,rgba(0,0,0,0) 1px,rgba(0,0,0,0) 3px),linear-gradient(180deg,rgba(0,0,0,.28) 0%,rgba(0,0,0,.1) 35%,rgba(0,0,0,0) 70%,rgba(255,255,255,.06) 100%),linear-gradient(90deg,#242424 0%,#3a3a3a 10%,#6a6a6a 30%,#9a9a9a 50%,#6c6c6c 70%,#3a3a3a 90%,#242424 100%);"></div>
<span class="t" style="left:1233.30px;top:445.99px;font-size:11px;color:#dadada;letter-spacing:-0.17px;">0.000</span>
<div class="a" style="left:1285.1px;top:442.8px;width:1.2px;height:9.6px;background:#d4d4d4;"></div>
<div class="a" style="left:1111.5px;top:460.4px;width:183px;height:1px;background:#505050;"></div>
<svg class="a" style="left:1115.9px;top:463px" width="12" height="12" viewBox="0 0 12 12"><g fill="#c8c8c8"><circle cx="10.30" cy="7.33" r="0.48"/><circle cx="8.70" cy="9.60" r="0.48"/><circle cx="6.06" cy="10.50" r="0.48"/><circle cx="3.41" cy="9.68" r="0.48"/><circle cx="1.74" cy="7.45" r="0.48"/><circle cx="1.70" cy="4.67" r="0.48"/><circle cx="3.30" cy="2.40" r="0.48"/><circle cx="5.94" cy="1.50" r="0.48"/><circle cx="8.59" cy="2.32" r="0.48"/><circle cx="10.26" cy="4.55" r="0.48"/></g></svg>
<span class="t" style="left:1130.10px;top:462.79px;font-size:11px;color:#dadada;letter-spacing:-0.17px;">Offset</span>
<svg class="a" style="left:1139.5px;top:474px" width="92" height="16" viewBox="0 0 92 16"><polygon points="1,8 6.7,2.6 6.7,13.4" fill="#8a8a8a"/><polygon points="83.6,2.6 89.3,8 83.6,13.4" fill="#8a8a8a"/></svg><div class="a" style="left:1148.5px;top:475px;width:71.6px;height:14px;box-sizing:border-box;border:1px solid #0c0c0c;background:repeating-linear-gradient(90deg,rgba(0,0,0,.22) 0,rgba(0,0,0,.22) 1px,rgba(0,0,0,0) 1px,rgba(0,0,0,0) 3px),linear-gradient(180deg,rgba(0,0,0,.28) 0%,rgba(0,0,0,.1) 35%,rgba(0,0,0,0) 70%,rgba(255,255,255,.06) 100%),linear-gradient(90deg,#242424 0%,#3a3a3a 10%,#6a6a6a 30%,#9a9a9a 50%,#6c6c6c 70%,#3a3a3a 90%,#242424 100%);"></div>
<span class="t" style="left:1233.30px;top:477.99px;font-size:11px;color:#dadada;letter-spacing:-0.17px;">4.300</span>
<div class="a" style="left:1285.1px;top:474.8px;width:1.2px;height:9.6px;background:#d4d4d4;"></div>
<div class="a" style="left:1111.5px;top:492.4px;width:183px;height:1px;background:#505050;"></div>
<div class="a" style="left:1107px;top:497.4px;width:12.9px;height:12.4px;background:#4b4b4b;box-sizing:border-box;border:1px solid #666;"></div>
<div class="a" style="left:1111px;top:503.3px;width:5.2px;height:1.2px;background:#161616;"></div>
<span class="t" style="left:1122.10px;top:495.18px;font-size:11.6px;color:#d6d6d6;letter-spacing:0.442px;">Transform</span>
<div class="a" style="left:1113px;top:514.2px;width:168px;height:1px;background:#525252;"></div>
<svg class="a" style="left:1115.9px;top:515.2px" width="12" height="12" viewBox="0 0 12 12"><g fill="#c8c8c8"><circle cx="10.30" cy="7.33" r="0.48"/><circle cx="8.70" cy="9.60" r="0.48"/><circle cx="6.06" cy="10.50" r="0.48"/><circle cx="3.41" cy="9.68" r="0.48"/><circle cx="1.74" cy="7.45" r="0.48"/><circle cx="1.70" cy="4.67" r="0.48"/><circle cx="3.30" cy="2.40" r="0.48"/><circle cx="5.94" cy="1.50" r="0.48"/><circle cx="8.59" cy="2.32" r="0.48"/><circle cx="10.26" cy="4.55" r="0.48"/></g></svg>
<span class="t" style="left:1130.10px;top:514.99px;font-size:11px;color:#8ee68e;letter-spacing:-0.17px;">Scale</span>
<svg class="a" style="left:1139.5px;top:526.2px" width="92" height="16" viewBox="0 0 92 16"><polygon points="1,8 6.7,2.6 6.7,13.4" fill="#8a8a8a"/><polygon points="83.6,2.6 89.3,8 83.6,13.4" fill="#8a8a8a"/></svg><div class="a" style="left:1148.5px;top:527.2px;width:71.6px;height:14px;box-sizing:border-box;border:1px solid #0c0c0c;background:repeating-linear-gradient(90deg,rgba(0,0,0,.22) 0,rgba(0,0,0,.22) 1px,rgba(0,0,0,0) 1px,rgba(0,0,0,0) 3px),linear-gradient(180deg,rgba(0,0,0,.28) 0%,rgba(0,0,0,.1) 35%,rgba(0,0,0,0) 70%,rgba(255,255,255,.06) 100%),linear-gradient(90deg,#242424 0%,#3a3a3a 10%,#6a6a6a 30%,#9a9a9a 50%,#6c6c6c 70%,#3a3a3a 90%,#242424 100%);"></div>
<span class="t" style="left:1233.30px;top:530.19px;font-size:11px;color:#8ee68e;letter-spacing:-0.17px;">309 %</span>
<div class="a" style="left:1285.1px;top:527px;width:1.2px;height:9.6px;background:#d4d4d4;"></div>
<div class="a" style="left:1111.5px;top:544.6px;width:183px;height:1px;background:#505050;"></div>

<span class="t" style="left:1130.10px;top:546.99px;font-size:11px;color:#e8e184;letter-spacing:-0.17px;">yRotate</span>
<svg class="a" style="left:1139.5px;top:558.2px" width="92" height="16" viewBox="0 0 92 16"><polygon points="1,8 6.7,2.6 6.7,13.4" fill="#8a8a8a"/><polygon points="83.6,2.6 89.3,8 83.6,13.4" fill="#8a8a8a"/></svg><div class="a" style="left:1148.5px;top:559.2px;width:71.6px;height:14px;box-sizing:border-box;border:1px solid #0c0c0c;background:repeating-linear-gradient(90deg,rgba(0,0,0,.22) 0,rgba(0,0,0,.22) 1px,rgba(0,0,0,0) 1px,rgba(0,0,0,0) 3px),linear-gradient(180deg,rgba(0,0,0,.28) 0%,rgba(0,0,0,.1) 35%,rgba(0,0,0,0) 70%,rgba(255,255,255,.06) 100%),linear-gradient(90deg,#242424 0%,#3a3a3a 10%,#6a6a6a 30%,#9a9a9a 50%,#6c6c6c 70%,#3a3a3a 90%,#242424 100%);"></div>
<span class="t" style="left:1233.30px;top:562.19px;font-size:11px;color:#e8e184;letter-spacing:-0.17px;">0 °</span>
<div class="a" style="left:1285.1px;top:559px;width:1.2px;height:9.6px;background:#d4d4d4;"></div>
<div class="a" style="left:1111.5px;top:576.6px;width:183px;height:1px;background:#505050;"></div>

<span class="t" style="left:1130.10px;top:578.99px;font-size:11px;color:#e8e184;letter-spacing:-0.17px;">xRotate</span>
<svg class="a" style="left:1139.5px;top:590.2px" width="92" height="16" viewBox="0 0 92 16"><polygon points="1,8 6.7,2.6 6.7,13.4" fill="#8a8a8a"/><polygon points="83.6,2.6 89.3,8 83.6,13.4" fill="#8a8a8a"/></svg><div class="a" style="left:1148.5px;top:591.2px;width:71.6px;height:14px;box-sizing:border-box;border:1px solid #0c0c0c;background:repeating-linear-gradient(90deg,rgba(0,0,0,.22) 0,rgba(0,0,0,.22) 1px,rgba(0,0,0,0) 1px,rgba(0,0,0,0) 3px),linear-gradient(180deg,rgba(0,0,0,.28) 0%,rgba(0,0,0,.1) 35%,rgba(0,0,0,0) 70%,rgba(255,255,255,.06) 100%),linear-gradient(90deg,#242424 0%,#3a3a3a 10%,#6a6a6a 30%,#9a9a9a 50%,#6c6c6c 70%,#3a3a3a 90%,#242424 100%);"></div>
<span class="t" style="left:1233.30px;top:594.19px;font-size:11px;color:#e8e184;letter-spacing:-0.17px;">0 °</span>
<div class="a" style="left:1285.1px;top:591px;width:1.2px;height:9.6px;background:#d4d4d4;"></div>
<div class="a" style="left:1111.5px;top:608.6px;width:183px;height:1px;background:#505050;"></div>

<span class="t" style="left:1130.10px;top:610.99px;font-size:11px;color:#e8e184;letter-spacing:-0.17px;">zRotate</span>
<svg class="a" style="left:1139.5px;top:622.2px" width="92" height="16" viewBox="0 0 92 16"><polygon points="1,8 6.7,2.6 6.7,13.4" fill="#8a8a8a"/><polygon points="83.6,2.6 89.3,8 83.6,13.4" fill="#8a8a8a"/></svg><div class="a" style="left:1148.5px;top:623.2px;width:71.6px;height:14px;box-sizing:border-box;border:1px solid #0c0c0c;background:repeating-linear-gradient(90deg,rgba(0,0,0,.22) 0,rgba(0,0,0,.22) 1px,rgba(0,0,0,0) 1px,rgba(0,0,0,0) 3px),linear-gradient(180deg,rgba(0,0,0,.28) 0%,rgba(0,0,0,.1) 35%,rgba(0,0,0,0) 70%,rgba(255,255,255,.06) 100%),linear-gradient(90deg,#242424 0%,#3a3a3a 10%,#6a6a6a 30%,#9a9a9a 50%,#6c6c6c 70%,#3a3a3a 90%,#242424 100%);"></div>
<span class="t" style="left:1233.30px;top:626.19px;font-size:11px;color:#e8e184;letter-spacing:-0.17px;">0 °</span>
<div class="a" style="left:1285.1px;top:623px;width:1.2px;height:9.6px;background:#d4d4d4;"></div>
<div class="a" style="left:1111.5px;top:640.6px;width:183px;height:1px;background:#505050;"></div>
<svg class="a" style="left:1115.9px;top:643.2px" width="12" height="12" viewBox="0 0 12 12"><g fill="#c8c8c8"><circle cx="10.30" cy="7.33" r="0.48"/><circle cx="8.70" cy="9.60" r="0.48"/><circle cx="6.06" cy="10.50" r="0.48"/><circle cx="3.41" cy="9.68" r="0.48"/><circle cx="1.74" cy="7.45" r="0.48"/><circle cx="1.70" cy="4.67" r="0.48"/><circle cx="3.30" cy="2.40" r="0.48"/><circle cx="5.94" cy="1.50" r="0.48"/><circle cx="8.59" cy="2.32" r="0.48"/><circle cx="10.26" cy="4.55" r="0.48"/></g></svg>
<span class="t" style="left:1130.10px;top:642.99px;font-size:11px;color:#e9b78a;letter-spacing:-0.17px;">xTran</span>
<svg class="a" style="left:1139.5px;top:654.2px" width="92" height="16" viewBox="0 0 92 16"><polygon points="1,8 6.7,2.6 6.7,13.4" fill="#8a8a8a"/><polygon points="83.6,2.6 89.3,8 83.6,13.4" fill="#8a8a8a"/></svg><div class="a" style="left:1148.5px;top:655.2px;width:71.6px;height:14px;box-sizing:border-box;border:1px solid #0c0c0c;background:repeating-linear-gradient(90deg,rgba(0,0,0,.22) 0,rgba(0,0,0,.22) 1px,rgba(0,0,0,0) 1px,rgba(0,0,0,0) 3px),linear-gradient(180deg,rgba(0,0,0,.28) 0%,rgba(0,0,0,.1) 35%,rgba(0,0,0,0) 70%,rgba(255,255,255,.06) 100%),linear-gradient(90deg,#242424 0%,#3a3a3a 10%,#6a6a6a 30%,#9a9a9a 50%,#6c6c6c 70%,#3a3a3a 90%,#242424 100%);"></div>
<span class="t" style="left:1233.30px;top:658.19px;font-size:11px;color:#e9b78a;letter-spacing:-0.17px;">-14.68</span>
<div class="a" style="left:1285.1px;top:655px;width:1.2px;height:9.6px;background:#d4d4d4;"></div>
<div class="a" style="left:1111.5px;top:672.6px;width:183px;height:1px;background:#505050;"></div>
<svg class="a" style="left:1115.9px;top:675.2px" width="12" height="12" viewBox="0 0 12 12"><g fill="#c8c8c8"><circle cx="10.30" cy="7.33" r="0.48"/><circle cx="8.70" cy="9.60" r="0.48"/><circle cx="6.06" cy="10.50" r="0.48"/><circle cx="3.41" cy="9.68" r="0.48"/><circle cx="1.74" cy="7.45" r="0.48"/><circle cx="1.70" cy="4.67" r="0.48"/><circle cx="3.30" cy="2.40" r="0.48"/><circle cx="5.94" cy="1.50" r="0.48"/><circle cx="8.59" cy="2.32" r="0.48"/><circle cx="10.26" cy="4.55" r="0.48"/></g></svg>
<span class="t" style="left:1130.10px;top:674.99px;font-size:11px;color:#e9b78a;letter-spacing:-0.17px;">yTran</span>
<svg class="a" style="left:1139.5px;top:686.2px" width="92" height="16" viewBox="0 0 92 16"><polygon points="1,8 6.7,2.6 6.7,13.4" fill="#8a8a8a"/><polygon points="83.6,2.6 89.3,8 83.6,13.4" fill="#8a8a8a"/></svg><div class="a" style="left:1148.5px;top:687.2px;width:71.6px;height:14px;box-sizing:border-box;border:1px solid #0c0c0c;background:repeating-linear-gradient(90deg,rgba(0,0,0,.22) 0,rgba(0,0,0,.22) 1px,rgba(0,0,0,0) 1px,rgba(0,0,0,0) 3px),linear-gradient(180deg,rgba(0,0,0,.28) 0%,rgba(0,0,0,.1) 35%,rgba(0,0,0,0) 70%,rgba(255,255,255,.06) 100%),linear-gradient(90deg,#242424 0%,#3a3a3a 10%,#6a6a6a 30%,#9a9a9a 50%,#6c6c6c 70%,#3a3a3a 90%,#242424 100%);"></div>
<span class="t" style="left:1233.30px;top:690.19px;font-size:11px;color:#e9b78a;letter-spacing:-0.17px;">0.197</span>
<div class="a" style="left:1285.1px;top:687px;width:1.2px;height:9.6px;background:#d4d4d4;"></div>
<div class="a" style="left:1111.5px;top:704.6px;width:183px;height:1px;background:#505050;"></div>
<svg class="a" style="left:1115.9px;top:707.2px" width="12" height="12" viewBox="0 0 12 12"><g fill="#c8c8c8"><circle cx="10.30" cy="7.33" r="0.48"/><circle cx="8.70" cy="9.60" r="0.48"/><circle cx="6.06" cy="10.50" r="0.48"/><circle cx="3.41" cy="9.68" r="0.48"/><circle cx="1.74" cy="7.45" r="0.48"/><circle cx="1.70" cy="4.67" r="0.48"/><circle cx="3.30" cy="2.40" r="0.48"/><circle cx="5.94" cy="1.50" r="0.48"/><circle cx="8.59" cy="2.32" r="0.48"/><circle cx="10.26" cy="4.55" r="0.48"/></g></svg>
<span class="t" style="left:1130.10px;top:706.99px;font-size:11px;color:#e9b78a;letter-spacing:-0.17px;">zTran</span>
<svg class="a" style="left:1139.5px;top:718.2px" width="92" height="16" viewBox="0 0 92 16"><polygon points="1,8 6.7,2.6 6.7,13.4" fill="#8a8a8a"/><polygon points="83.6,2.6 89.3,8 83.6,13.4" fill="#8a8a8a"/></svg><div class="a" style="left:1148.5px;top:719.2px;width:71.6px;height:14px;box-sizing:border-box;border:1px solid #0c0c0c;background:repeating-linear-gradient(90deg,rgba(0,0,0,.22) 0,rgba(0,0,0,.22) 1px,rgba(0,0,0,0) 1px,rgba(0,0,0,0) 3px),linear-gradient(180deg,rgba(0,0,0,.28) 0%,rgba(0,0,0,.1) 35%,rgba(0,0,0,0) 70%,rgba(255,255,255,.06) 100%),linear-gradient(90deg,#242424 0%,#3a3a3a 10%,#6a6a6a 30%,#9a9a9a 50%,#6c6c6c 70%,#3a3a3a 90%,#242424 100%);"></div>
<span class="t" style="left:1233.30px;top:722.19px;font-size:11px;color:#e9b78a;letter-spacing:-0.17px;">0.075</span>
<div class="a" style="left:1285.1px;top:719px;width:1.2px;height:9.6px;background:#d4d4d4;"></div>
<div class="a" style="left:1111.5px;top:736.6px;width:183px;height:1px;background:#505050;"></div>
</div>
<svg class="a" style="left:1097px;top:497.5px;" width="4" height="67" viewBox="0 0 4 67"><g stroke="#a2a2a2" stroke-width="0.8"><line x1="-0.3" y1="0.00" x2="4.3" y2="-3.50"/><line x1="-0.3" y1="3.30" x2="4.3" y2="-0.20"/><line x1="-0.3" y1="6.60" x2="4.3" y2="3.10"/><line x1="-0.3" y1="9.90" x2="4.3" y2="6.40"/><line x1="-0.3" y1="13.20" x2="4.3" y2="9.70"/><line x1="-0.3" y1="16.50" x2="4.3" y2="13.00"/><line x1="-0.3" y1="19.80" x2="4.3" y2="16.30"/><line x1="-0.3" y1="23.10" x2="4.3" y2="19.60"/><line x1="-0.3" y1="26.40" x2="4.3" y2="22.90"/><line x1="-0.3" y1="29.70" x2="4.3" y2="26.20"/><line x1="-0.3" y1="33.00" x2="4.3" y2="29.50"/><line x1="-0.3" y1="36.30" x2="4.3" y2="32.80"/><line x1="-0.3" y1="39.60" x2="4.3" y2="36.10"/><line x1="-0.3" y1="42.90" x2="4.3" y2="39.40"/><line x1="-0.3" y1="46.20" x2="4.3" y2="42.70"/><line x1="-0.3" y1="49.50" x2="4.3" y2="46.00"/><line x1="-0.3" y1="52.80" x2="4.3" y2="49.30"/><line x1="-0.3" y1="56.10" x2="4.3" y2="52.60"/><line x1="-0.3" y1="59.40" x2="4.3" y2="55.90"/><line x1="-0.3" y1="62.70" x2="4.3" y2="59.20"/><line x1="-0.3" y1="66.00" x2="4.3" y2="62.50"/><line x1="-0.3" y1="69.30" x2="4.3" y2="65.80"/><line x1="-0.3" y1="72.60" x2="4.3" y2="69.10"/></g></svg>
<svg class="a" style="left:1322px;top:509.5px;" width="4" height="67.5" viewBox="0 0 4 67.5"><g stroke="#a2a2a2" stroke-width="0.8"><line x1="-0.3" y1="0.00" x2="4.3" y2="-3.50"/><line x1="-0.3" y1="3.30" x2="4.3" y2="-0.20"/><line x1="-0.3" y1="6.60" x2="4.3" y2="3.10"/><line x1="-0.3" y1="9.90" x2="4.3" y2="6.40"/><line x1="-0.3" y1="13.20" x2="4.3" y2="9.70"/><line x1="-0.3" y1="16.50" x2="4.3" y2="13.00"/><line x1="-0.3" y1="19.80" x2="4.3" y2="16.30"/><line x1="-0.3" y1="23.10" x2="4.3" y2="19.60"/><line x1="-0.3" y1="26.40" x2="4.3" y2="22.90"/><line x1="-0.3" y1="29.70" x2="4.3" y2="26.20"/><line x1="-0.3" y1="33.00" x2="4.3" y2="29.50"/><line x1="-0.3" y1="36.30" x2="4.3" y2="32.80"/><line x1="-0.3" y1="39.60" x2="4.3" y2="36.10"/><line x1="-0.3" y1="42.90" x2="4.3" y2="39.40"/><line x1="-0.3" y1="46.20" x2="4.3" y2="42.70"/><line x1="-0.3" y1="49.50" x2="4.3" y2="46.00"/><line x1="-0.3" y1="52.80" x2="4.3" y2="49.30"/><line x1="-0.3" y1="56.10" x2="4.3" y2="52.60"/><line x1="-0.3" y1="59.40" x2="4.3" y2="55.90"/><line x1="-0.3" y1="62.70" x2="4.3" y2="59.20"/><line x1="-0.3" y1="66.00" x2="4.3" y2="62.50"/><line x1="-0.3" y1="69.30" x2="4.3" y2="65.80"/><line x1="-0.3" y1="72.60" x2="4.3" y2="69.10"/></g></svg>
<div class="a" style="left:1590px;top:70px;width:3px;height:722px;background:linear-gradient(90deg,#3f3f3f,#4a4a4a);"></div>
<div class="a" style="left:1286px;top:785.2px;width:304px;height:7px;background:linear-gradient(180deg,#3b3b3b,#4b4b4b);"></div>
<div class="a" style="left:1285.6px;top:792px;width:1px;height:10px;background:#525252;"></div>
<div class="a" style="left:1311px;top:34.6px;width:226px;height:1.3px;background:#3a3a3a;"></div>
<div class="a" style="left:1536px;top:34.6px;width:1.1px;height:590.4px;background:#3a3a3a;"></div>
<div class="a" style="left:1539.5px;top:36px;width:1px;height:589px;background:#4f4f4f;"></div>
<div class="a" style="left:1327px;top:59.2px;width:1.1px;height:566px;background:#3a3a3a;"></div>
<div class="a" style="left:1300px;top:0;width:236px;height:802px;overflow:hidden;">
<div class="a" style="left:-1300px;top:0;width:1593px;height:802px;">
<svg class="a" style="left:1368.9px;top:36.9px;" width="150" height="20" viewBox="0 0 150 20">
<path d="M4.6 14.9 Q7.4 12 8.4 6.4 Q9 1.8 11.5 1.5 Q14 1.8 14.6 6.4 Q15.6 12 18.5 14.9 Z" fill="#959595"/>
<ellipse cx="11.4" cy="15.9" rx="1.9" ry="1.1" fill="#959595"/>
<rect x="13.4" y="0.9" width="15.2" height="12.3" rx="1.5" fill="#e8c612"/>
<g fill="#1c1a10">
<path d="M15.2 7 L17.1 4.7 H18.5 V11.3 H16.9 V6.8 L15.2 8.3 Z"/>
<path d="M19.4 7 L21.3 4.7 H22.7 V11.3 H21.1 V6.8 L19.4 8.3 Z"/>
<path fill-rule="evenodd" d="M25.9 4.6 C27.5 4.6 28.3 5.9 28.3 8 C28.3 10.1 27.5 11.4 25.9 11.4 C24.3 11.4 23.5 10.1 23.5 8 C23.5 5.9 24.3 4.6 25.9 4.6 Z M25.9 5.9 C25.2 5.9 25 6.7 25 8 C25 9.3 25.2 10.1 25.9 10.1 C26.6 10.1 26.8 9.3 26.8 8 C26.8 6.7 26.6 5.9 25.9 5.9 Z"/>
</g>
<path d="M67.2 2.5 H82.6 Q84.6 2.5 84.6 4.5 V11.8 Q84.6 13.8 82.6 13.8 H76.6 L74 16.9 L73.3 13.8 H67.2 Q65.2 13.8 65.2 11.8 V4.5 Q65.2 2.5 67.2 2.5 Z" fill="#e8c612"/>
<g fill="#8c8c8c">
<polygon points="121.3,13.6 125.6,2 129.1,2.6 125.2,13.6"/>
<rect x="130.4" y="2" width="3.7" height="11.6"/>
<rect x="135.3" y="0.5" width="4.4" height="13.1"/>
<rect x="141" y="2.4" width="2.5" height="11.2"/>
<rect x="120.5" y="15" width="25.7" height="1.1"/>
</g>
</svg>
<div class="a" style="left:1327.5px;top:59.1px;width:209px;height:1.2px;background:#3a3a3a;"></div>
<svg class="a" style="left:1333px;top:65.1px;" width="18" height="12" viewBox="0 0 18 12"><polygon points="2,2.4 15.6,2.4 8.8,10" fill="#e4e4e4"/><polygon points="5,2.4 12.6,2.4 8.8,6" fill="#fff" opacity=".3"/></svg>
<span class="t" style="left:1351.90px;top:65.80px;font-size:13px;color:#ececec;letter-spacing:-0.17px;">Wave Zone 1</span>
<svg class="a" style="left:1484.4px;top:63.1px;" width="30" height="15" viewBox="0 0 30 15"><polyline points="12.6,2.4 3.6,7.4 12.6,12.4" fill="none" stroke="#f4f4f4" stroke-width="1.5"/><polyline points="18,2.4 26,7.4 18,12.4" fill="none" stroke="#7a7a7a" stroke-width="1.5"/></svg>
<div class="a" style="left:1327.5px;top:101.1px;width:209px;height:1px;background:#383838;"></div>
<svg class="a" style="left:1327.5px;top:83.1px;" width="92" height="21" viewBox="0 0 92 21"><rect x="0" y="2.6" width="84" height="16.4" fill="#4b4b4b"/><rect x="84" y="12" width="2" height="6" fill="#4b4b4b"/><path d="M0 2.3 H80.6 Q84.6 2.3 84.6 6.3 V15 Q84.6 18.4 88.4 18.4" fill="none" stroke="#353535" stroke-width="1.3"/></svg>
<span class="t" style="left:1341.80px;top:87.79px;font-size:11px;color:#d2d2d2;letter-spacing:-0.216px;">Parameters</span>
<div class="a" style="left:1416px;top:84.9px;width:85.5px;height:16.7px;background:#464646;box-sizing:border-box;border:1px solid #343434;border-bottom:none;border-radius:4px 4px 0 0;"></div>
<span class="t" style="left:1433.10px;top:87.79px;font-size:11px;color:#d2d2d2;letter-spacing:-0.164px;">Properties</span>
<div class="a" style="left:1329.2px;top:106.1px;width:183.4px;height:20px;background:#ffffff;"></div>
<div class="a" style="left:1332px;top:138.4px;width:12.9px;height:12.4px;background:#4b4b4b;box-sizing:border-box;border:1px solid #666;"></div>
<div class="a" style="left:1336px;top:144.3px;width:5.2px;height:1.2px;background:#161616;"></div>
<span class="t" style="left:1347.10px;top:136.18px;font-size:11.6px;color:#d6d6d6;letter-spacing:0.442px;">Transform</span>
<div class="a" style="left:1338px;top:155.2px;width:168px;height:1px;background:#525252;"></div>
<div class="a" style="left:1341.6px;top:157.7px;width:9.6px;height:9.6px;border-radius:50%;background:#7df07d;"></div>
<span class="t" style="left:1355.10px;top:155.99px;font-size:11px;color:#8ee68e;letter-spacing:-0.17px;">Scale</span>
<svg class="a" style="left:1364.5px;top:167.2px" width="92" height="16" viewBox="0 0 92 16"><polygon points="1,8 6.7,2.6 6.7,13.4" fill="#8a8a8a"/><polygon points="83.6,2.6 89.3,8 83.6,13.4" fill="#8a8a8a"/></svg><div class="a" style="left:1373.5px;top:168.2px;width:71.6px;height:14px;box-sizing:border-box;border:1px solid #0c0c0c;background:repeating-linear-gradient(90deg,rgba(0,0,0,.22) 0,rgba(0,0,0,.22) 1px,rgba(0,0,0,0) 1px,rgba(0,0,0,0) 3px),linear-gradient(180deg,rgba(0,0,0,.28) 0%,rgba(0,0,0,.1) 35%,rgba(0,0,0,0) 70%,rgba(255,255,255,.06) 100%),linear-gradient(90deg,#242424 0%,#3a3a3a 10%,#6a6a6a 30%,#9a9a9a 50%,#6c6c6c 70%,#3a3a3a 90%,#242424 100%);"></div>
<span class="t" style="left:1458.30px;top:171.19px;font-size:11px;color:#8ee68e;letter-spacing:-0.17px;">100 %</span>
<svg class="a" style="left:1509px;top:167.2px;" width="9" height="13" viewBox="0 0 9 13"><polygon points="1,1.2 7,6.2 1,11.2" fill="#dedede"/></svg>
<div class="a" style="left:1336.5px;top:185.6px;width:183px;height:1px;background:#505050;"></div>
<svg class="a" style="left:1340.9px;top:188.2px" width="12" height="12" viewBox="0 0 12 12"><g fill="#c8c8c8"><circle cx="10.30" cy="7.33" r="0.48"/><circle cx="8.70" cy="9.60" r="0.48"/><circle cx="6.06" cy="10.50" r="0.48"/><circle cx="3.41" cy="9.68" r="0.48"/><circle cx="1.74" cy="7.45" r="0.48"/><circle cx="1.70" cy="4.67" r="0.48"/><circle cx="3.30" cy="2.40" r="0.48"/><circle cx="5.94" cy="1.50" r="0.48"/><circle cx="8.59" cy="2.32" r="0.48"/><circle cx="10.26" cy="4.55" r="0.48"/></g></svg>
<span class="t" style="left:1355.10px;top:187.99px;font-size:11px;color:#dadada;letter-spacing:-0.17px;">xScale</span>
<svg class="a" style="left:1364.5px;top:199.2px" width="92" height="16" viewBox="0 0 92 16"><polygon points="1,8 6.7,2.6 6.7,13.4" fill="#8a8a8a"/><polygon points="83.6,2.6 89.3,8 83.6,13.4" fill="#8a8a8a"/></svg><div class="a" style="left:1373.5px;top:200.2px;width:71.6px;height:14px;box-sizing:border-box;border:1px solid #0c0c0c;background:repeating-linear-gradient(90deg,rgba(0,0,0,.22) 0,rgba(0,0,0,.22) 1px,rgba(0,0,0,0) 1px,rgba(0,0,0,0) 3px),linear-gradient(180deg,rgba(0,0,0,.28) 0%,rgba(0,0,0,.1) 35%,rgba(0,0,0,0) 70%,rgba(255,255,255,.06) 100%),linear-gradient(90deg,#242424 0%,#3a3a3a 10%,#6a6a6a 30%,#9a9a9a 50%,#6c6c6c 70%,#3a3a3a 90%,#242424 100%);"></div>
<span class="t" style="left:1458.30px;top:203.19px;font-size:11px;color:#dadada;letter-spacing:-0.17px;">100 %</span>
<svg class="a" style="left:1509px;top:199.2px;" width="9" height="13" viewBox="0 0 9 13"><polygon points="1,1.2 7,6.2 1,11.2" fill="#dedede"/></svg>
<div class="a" style="left:1336.5px;top:217.6px;width:183px;height:1px;background:#505050;"></div>
<svg class="a" style="left:1340.9px;top:220.2px" width="12" height="12" viewBox="0 0 12 12"><g fill="#c8c8c8"><circle cx="10.30" cy="7.33" r="0.48"/><circle cx="8.70" cy="9.60" r="0.48"/><circle cx="6.06" cy="10.50" r="0.48"/><circle cx="3.41" cy="9.68" r="0.48"/><circle cx="1.74" cy="7.45" r="0.48"/><circle cx="1.70" cy="4.67" r="0.48"/><circle cx="3.30" cy="2.40" r="0.48"/><circle cx="5.94" cy="1.50" r="0.48"/><circle cx="8.59" cy="2.32" r="0.48"/><circle cx="10.26" cy="4.55" r="0.48"/></g></svg>
<span class="t" style="left:1355.10px;top:219.99px;font-size:11px;color:#dadada;letter-spacing:-0.17px;">yScale</span>
<svg class="a" style="left:1364.5px;top:231.2px" width="92" height="16" viewBox="0 0 92 16"><polygon points="1,8 6.7,2.6 6.7,13.4" fill="#8a8a8a"/><polygon points="83.6,2.6 89.3,8 83.6,13.4" fill="#8a8a8a"/></svg><div class="a" style="left:1373.5px;top:232.2px;width:71.6px;height:14px;box-sizing:border-box;border:1px solid #0c0c0c;background:repeating-linear-gradient(90deg,rgba(0,0,0,.22) 0,rgba(0,0,0,.22) 1px,rgba(0,0,0,0) 1px,rgba(0,0,0,0) 3px),linear-gradient(180deg,rgba(0,0,0,.28) 0%,rgba(0,0,0,.1) 35%,rgba(0,0,0,0) 70%,rgba(255,255,255,.06) 100%),linear-gradient(90deg,#242424 0%,#3a3a3a 10%,#6a6a6a 30%,#9a9a9a 50%,#6c6c6c 70%,#3a3a3a 90%,#242424 100%);"></div>
<span class="t" style="left:1458.30px;top:235.19px;font-size:11px;color:#dadada;letter-spacing:-0.17px;">100 %</span>
<svg class="a" style="left:1509px;top:231.2px;" width="9" height="13" viewBox="0 0 9 13"><polygon points="1,1.2 7,6.2 1,11.2" fill="#dedede"/></svg>
<div class="a" style="left:1336.5px;top:249.6px;width:183px;height:1px;background:#505050;"></div>
<svg class="a" style="left:1340.9px;top:252.2px" width="12" height="12" viewBox="0 0 12 12"><g fill="#c8c8c8"><circle cx="10.30" cy="7.33" r="0.48"/><circle cx="8.70" cy="9.60" r="0.48"/><circle cx="6.06" cy="10.50" r="0.48"/><circle cx="3.41" cy="9.68" r="0.48"/><circle cx="1.74" cy="7.45" r="0.48"/><circle cx="1.70" cy="4.67" r="0.48"/><circle cx="3.30" cy="2.40" r="0.48"/><circle cx="5.94" cy="1.50" r="0.48"/><circle cx="8.59" cy="2.32" r="0.48"/><circle cx="10.26" cy="4.55" r="0.48"/></g></svg>
<span class="t" style="left:1355.10px;top:251.99px;font-size:11px;color:#dadada;letter-spacing:-0.17px;">zScale</span>
<svg class="a" style="left:1364.5px;top:263.2px" width="92" height="16" viewBox="0 0 92 16"><polygon points="1,8 6.7,2.6 6.7,13.4" fill="#8a8a8a"/><polygon points="83.6,2.6 89.3,8 83.6,13.4" fill="#8a8a8a"/></svg><div class="a" style="left:1373.5px;top:264.2px;width:71.6px;height:14px;box-sizing:border-box;border:1px solid #0c0c0c;background:repeating-linear-gradient(90deg,rgba(0,0,0,.22) 0,rgba(0,0,0,.22) 1px,rgba(0,0,0,0) 1px,rgba(0,0,0,0) 3px),linear-gradient(180deg,rgba(0,0,0,.28) 0%,rgba(0,0,0,.1) 35%,rgba(0,0,0,0) 70%,rgba(255,255,255,.06) 100%),linear-gradient(90deg,#242424 0%,#3a3a3a 10%,#6a6a6a 30%,#9a9a9a 50%,#6c6c6c 70%,#3a3a3a 90%,#242424 100%);"></div>
<span class="t" style="left:1458.30px;top:267.19px;font-size:11px;color:#dadada;letter-spacing:-0.17px;">100 %</span>
<svg class="a" style="left:1509px;top:263.2px;" width="9" height="13" viewBox="0 0 9 13"><polygon points="1,1.2 7,6.2 1,11.2" fill="#dedede"/></svg>
<div class="a" style="left:1336.5px;top:281.6px;width:183px;height:1px;background:#505050;"></div>

<span class="t" style="left:1355.10px;top:283.99px;font-size:11px;color:#e8e184;letter-spacing:-0.17px;">yRotate</span>
<svg class="a" style="left:1364.5px;top:295.2px" width="92" height="16" viewBox="0 0 92 16"><polygon points="1,8 6.7,2.6 6.7,13.4" fill="#8a8a8a"/><polygon points="83.6,2.6 89.3,8 83.6,13.4" fill="#8a8a8a"/></svg><div class="a" style="left:1373.5px;top:296.2px;width:71.6px;height:14px;box-sizing:border-box;border:1px solid #0c0c0c;background:repeating-linear-gradient(90deg,rgba(0,0,0,.22) 0,rgba(0,0,0,.22) 1px,rgba(0,0,0,0) 1px,rgba(0,0,0,0) 3px),linear-gradient(180deg,rgba(0,0,0,.28) 0%,rgba(0,0,0,.1) 35%,rgba(0,0,0,0) 70%,rgba(255,255,255,.06) 100%),linear-gradient(90deg,#242424 0%,#3a3a3a 10%,#6a6a6a 30%,#9a9a9a 50%,#6c6c6c 70%,#3a3a3a 90%,#242424 100%);"></div>
<span class="t" style="left:1458.30px;top:299.19px;font-size:11px;color:#e8e184;letter-spacing:-0.17px;">0 °</span>
<svg class="a" style="left:1509px;top:295.2px;" width="9" height="13" viewBox="0 0 9 13"><polygon points="1,1.2 7,6.2 1,11.2" fill="#dedede"/></svg>
<div class="a" style="left:1336.5px;top:313.6px;width:183px;height:1px;background:#505050;"></div>

<span class="t" style="left:1355.10px;top:315.99px;font-size:11px;color:#e8e184;letter-spacing:-0.17px;">xRotate</span>
<svg class="a" style="left:1364.5px;top:327.2px" width="92" height="16" viewBox="0 0 92 16"><polygon points="1,8 6.7,2.6 6.7,13.4" fill="#8a8a8a"/><polygon points="83.6,2.6 89.3,8 83.6,13.4" fill="#8a8a8a"/></svg><div class="a" style="left:1373.5px;top:328.2px;width:71.6px;height:14px;box-sizing:border-box;border:1px solid #0c0c0c;background:repeating-linear-gradient(90deg,rgba(0,0,0,.22) 0,rgba(0,0,0,.22) 1px,rgba(0,0,0,0) 1px,rgba(0,0,0,0) 3px),linear-gradient(180deg,rgba(0,0,0,.28) 0%,rgba(0,0,0,.1) 35%,rgba(0,0,0,0) 70%,rgba(255,255,255,.06) 100%),linear-gradient(90deg,#242424 0%,#3a3a3a 10%,#6a6a6a 30%,#9a9a9a 50%,#6c6c6c 70%,#3a3a3a 90%,#242424 100%);"></div>
<span class="t" style="left:1458.30px;top:331.19px;font-size:11px;color:#e8e184;letter-spacing:-0.17px;">0 °</span>
<svg class="a" style="left:1509px;top:327.2px;" width="9" height="13" viewBox="0 0 9 13"><polygon points="1,1.2 7,6.2 1,11.2" fill="#dedede"/></svg>
<div class="a" style="left:1336.5px;top:345.6px;width:183px;height:1px;background:#505050;"></div>

<span class="t" style="left:1355.10px;top:347.99px;font-size:11px;color:#e8e184;letter-spacing:-0.17px;">zRotate</span>
<svg class="a" style="left:1364.5px;top:359.2px" width="92" height="16" viewBox="0 0 92 16"><polygon points="1,8 6.7,2.6 6.7,13.4" fill="#8a8a8a"/><polygon points="83.6,2.6 89.3,8 83.6,13.4" fill="#8a8a8a"/></svg><div class="a" style="left:1373.5px;top:360.2px;width:71.6px;height:14px;box-sizing:border-box;border:1px solid #0c0c0c;background:repeating-linear-gradient(90deg,rgba(0,0,0,.22) 0,rgba(0,0,0,.22) 1px,rgba(0,0,0,0) 1px,rgba(0,0,0,0) 3px),linear-gradient(180deg,rgba(0,0,0,.28) 0%,rgba(0,0,0,.1) 35%,rgba(0,0,0,0) 70%,rgba(255,255,255,.06) 100%),linear-gradient(90deg,#242424 0%,#3a3a3a 10%,#6a6a6a 30%,#9a9a9a 50%,#6c6c6c 70%,#3a3a3a 90%,#242424 100%);"></div>
<span class="t" style="left:1458.30px;top:363.19px;font-size:11px;color:#e8e184;letter-spacing:-0.17px;">0 °</span>
<svg class="a" style="left:1509px;top:359.2px;" width="9" height="13" viewBox="0 0 9 13"><polygon points="1,1.2 7,6.2 1,11.2" fill="#dedede"/></svg>
<div class="a" style="left:1336.5px;top:377.6px;width:183px;height:1px;background:#505050;"></div>

<span class="t" style="left:1355.10px;top:379.99px;font-size:11px;color:#e9b78a;letter-spacing:-0.17px;">xTran</span>
<svg class="a" style="left:1364.5px;top:391.2px" width="92" height="16" viewBox="0 0 92 16"><polygon points="1,8 6.7,2.6 6.7,13.4" fill="#8a8a8a"/><polygon points="83.6,2.6 89.3,8 83.6,13.4" fill="#8a8a8a"/></svg><div class="a" style="left:1373.5px;top:392.2px;width:71.6px;height:14px;box-sizing:border-box;border:1px solid #0c0c0c;background:repeating-linear-gradient(90deg,rgba(0,0,0,.22) 0,rgba(0,0,0,.22) 1px,rgba(0,0,0,0) 1px,rgba(0,0,0,0) 3px),linear-gradient(180deg,rgba(0,0,0,.28) 0%,rgba(0,0,0,.1) 35%,rgba(0,0,0,0) 70%,rgba(255,255,255,.06) 100%),linear-gradient(90deg,#242424 0%,#3a3a3a 10%,#6a6a6a 30%,#9a9a9a 50%,#6c6c6c 70%,#3a3a3a 90%,#242424 100%);"></div>
<span class="t" style="left:1458.30px;top:395.19px;font-size:11px;color:#e9b78a;letter-spacing:-0.17px;">0.000</span>
<svg class="a" style="left:1509px;top:391.2px;" width="9" height="13" viewBox="0 0 9 13"><polygon points="1,1.2 7,6.2 1,11.2" fill="#dedede"/></svg>
<div class="a" style="left:1336.5px;top:409.6px;width:183px;height:1px;background:#505050;"></div>
<svg class="a" style="left:1340.9px;top:412.2px" width="12" height="12" viewBox="0 0 12 12"><g fill="#c8c8c8"><circle cx="10.30" cy="7.33" r="0.48"/><circle cx="8.70" cy="9.60" r="0.48"/><circle cx="6.06" cy="10.50" r="0.48"/><circle cx="3.41" cy="9.68" r="0.48"/><circle cx="1.74" cy="7.45" r="0.48"/><circle cx="1.70" cy="4.67" r="0.48"/><circle cx="3.30" cy="2.40" r="0.48"/><circle cx="5.94" cy="1.50" r="0.48"/><circle cx="8.59" cy="2.32" r="0.48"/><circle cx="10.26" cy="4.55" r="0.48"/></g></svg>
<span class="t" style="left:1355.10px;top:411.99px;font-size:11px;color:#e9b78a;letter-spacing:-0.17px;">yTran</span>
<svg class="a" style="left:1364.5px;top:423.2px" width="92" height="16" viewBox="0 0 92 16"><polygon points="1,8 6.7,2.6 6.7,13.4" fill="#8a8a8a"/><polygon points="83.6,2.6 89.3,8 83.6,13.4" fill="#8a8a8a"/></svg><div class="a" style="left:1373.5px;top:424.2px;width:71.6px;height:14px;box-sizing:border-box;border:1px solid #0c0c0c;background:repeating-linear-gradient(90deg,rgba(0,0,0,.22) 0,rgba(0,0,0,.22) 1px,rgba(0,0,0,0) 1px,rgba(0,0,0,0) 3px),linear-gradient(180deg,rgba(0,0,0,.28) 0%,rgba(0,0,0,.1) 35%,rgba(0,0,0,0) 70%,rgba(255,255,255,.06) 100%),linear-gradient(90deg,#242424 0%,#3a3a3a 10%,#6a6a6a 30%,#9a9a9a 50%,#6c6c6c 70%,#3a3a3a 90%,#242424 100%);"></div>
<span class="t" style="left:1458.30px;top:427.19px;font-size:11px;color:#e9b78a;letter-spacing:-0.17px;">0.197</span>
<svg class="a" style="left:1509px;top:423.2px;" width="9" height="13" viewBox="0 0 9 13"><polygon points="1,1.2 7,6.2 1,11.2" fill="#dedede"/></svg>
<div class="a" style="left:1336.5px;top:441.6px;width:183px;height:1px;background:#505050;"></div>
<svg class="a" style="left:1340.9px;top:444.2px" width="12" height="12" viewBox="0 0 12 12"><g fill="#c8c8c8"><circle cx="10.30" cy="7.33" r="0.48"/><circle cx="8.70" cy="9.60" r="0.48"/><circle cx="6.06" cy="10.50" r="0.48"/><circle cx="3.41" cy="9.68" r="0.48"/><circle cx="1.74" cy="7.45" r="0.48"/><circle cx="1.70" cy="4.67" r="0.48"/><circle cx="3.30" cy="2.40" r="0.48"/><circle cx="5.94" cy="1.50" r="0.48"/><circle cx="8.59" cy="2.32" r="0.48"/><circle cx="10.26" cy="4.55" r="0.48"/></g></svg>
<span class="t" style="left:1355.10px;top:443.99px;font-size:11px;color:#e9b78a;letter-spacing:-0.17px;">zTran</span>
<svg class="a" style="left:1364.5px;top:455.2px" width="92" height="16" viewBox="0 0 92 16"><polygon points="1,8 6.7,2.6 6.7,13.4" fill="#8a8a8a"/><polygon points="83.6,2.6 89.3,8 83.6,13.4" fill="#8a8a8a"/></svg><div class="a" style="left:1373.5px;top:456.2px;width:71.6px;height:14px;box-sizing:border-box;border:1px solid #0c0c0c;background:repeating-linear-gradient(90deg,rgba(0,0,0,.22) 0,rgba(0,0,0,.22) 1px,rgba(0,0,0,0) 1px,rgba(0,0,0,0) 3px),linear-gradient(180deg,rgba(0,0,0,.28) 0%,rgba(0,0,0,.1) 35%,rgba(0,0,0,0) 70%,rgba(255,255,255,.06) 100%),linear-gradient(90deg,#242424 0%,#3a3a3a 10%,#6a6a6a 30%,#9a9a9a 50%,#6c6c6c 70%,#3a3a3a 90%,#242424 100%);"></div>
<span class="t" style="left:1458.30px;top:459.19px;font-size:11px;color:#e9b78a;letter-spacing:-0.17px;">0.075</span>
<svg class="a" style="left:1509px;top:455.2px;" width="9" height="13" viewBox="0 0 9 13"><polygon points="1,1.2 7,6.2 1,11.2" fill="#dedede"/></svg>
<div class="a" style="left:1336.5px;top:473.6px;width:183px;height:1px;background:#505050;"></div>
</div></div>
<div class="a" style="left:1526.5px;top:60px;width:9px;height:10.5px;background:#9c9c9c;box-sizing:border-box;border:1px solid #b8b8b8;border-right-color:#777;border-bottom-color:#777;"></div>
<svg class="a" style="left:1526.5px;top:60px;" width="9" height="11" viewBox="0 0 9 11"><polygon points="1.6,4 7.4,4 4.5,7.6" fill="#000"/></svg>
<svg class="a" style="left:1520px;top:84px;" width="9" height="13" viewBox="0 0 9 13"><polygon points="1.2,1.3 7.4,6.3 1.2,11.3" fill="#ececec"/></svg>
<svg class="a" style="left:1517px;top:107px;" width="14" height="14" viewBox="0 0 14 14"><circle cx="5.4" cy="5.6" r="3.3" fill="none" stroke="#1a1a1a" stroke-width="1.3"/><path d="M7.8 8 L11.6 11.8" stroke="#1a1a1a" stroke-width="1.6"/></svg>
<svg class="a" style="left:1425px;top:773px;" width="14" height="10" viewBox="0 0 14 10"><path d="M1.5 5.5 L4.6 8.2 L11 1.4" fill="none" stroke="#2e2e2e" stroke-width="1.2"/><path d="M3.5 4.5 L6.2 7 " fill="none" stroke="#2e2e2e" stroke-width="1"/></svg>
<div class="a" style="left:1469px;top:775px;width:82px;height:7.6px;overflow:hidden;">
<svg class="a" style="left:0;top:-11px" width="82" height="19" viewBox="0 0 82 19"><rect x="0.5" y="0.5" width="80.6" height="18" rx="9" fill="#646464"/><circle cx="11.4" cy="8.4" r="5.4" fill="#1c1c1c"/><circle cx="30.4" cy="8.4" r="5.4" fill="#b6dcff"/><circle cx="49.4" cy="8.4" r="5.4" fill="#5e4f4b"/><circle cx="68.7" cy="8.4" r="5.4" fill="#d9d2c6"/></svg>
</div>
</div>
<div class="a" style="left:0px;top:0px;width:1593px;height:20px;background:#ffffff;"></div>
<div class="a" style="left:0px;top:20px;width:1593px;height:2px;background:#3c3c3c;"></div>
<span class="t" style="left:-5.00px;top:3.84px;font-size:12px;color:#000;">e</span>
<div class="a" style="left:8.5px;top:0px;width:48px;height:19.4px;background:#cce8ff;box-sizing:border-box;border:1px solid #99d1ff;"></div>
<span class="t" style="left:14.80px;top:3.84px;font-size:12px;color:#000;letter-spacing:0.070px;">Object</span>
<span class="t" style="left:64.00px;top:3.84px;font-size:12px;color:#000;letter-spacing:-0.292px;">Display</span>
<span class="t" style="left:116.30px;top:3.84px;font-size:12px;color:#000;letter-spacing:-0.460px;">Render</span>
<span class="t" style="left:167.10px;top:3.84px;font-size:12px;color:#000;letter-spacing:0.227px;">Animation</span>
<span class="t" style="left:237.20px;top:3.84px;font-size:12px;color:#000;letter-spacing:0.170px;">Window</span>
<span class="t" style="left:294.90px;top:3.84px;font-size:12px;color:#000;letter-spacing:-0.239px;">Scripts</span>
<span class="t" style="left:343.90px;top:3.84px;font-size:12px;color:#000;letter-spacing:0.055px;">Help</span>
<div class="a" style="left:8.3px;top:20px;width:296.7px;height:523.6px;background:#f2f2f2;box-sizing:border-box;border:1px solid #cfcfcf;box-shadow:2px 2px 4px rgba(0,0,0,.35);"></div>
<span class="t" style="left:43.10px;top:26.84px;font-size:12px;color:#000000;letter-spacing:-0.238px;">Properties...</span>
<span class="t" style="left:254.10px;top:26.84px;font-size:12px;color:#000;letter-spacing:0.049px;">Ctrl+I</span>
<span class="t" style="left:43.10px;top:48.84px;font-size:12px;color:#000000;letter-spacing:-0.060px;">Lock Object</span>
<div class="a" style="left:39px;top:69px;width:263px;height:1px;background:#d7d7d7;"></div>
<span class="t" style="left:43.10px;top:77.84px;font-size:12px;color:#000000;letter-spacing:-0.258px;">Change Parent...</span>
<span class="t" style="left:43.10px;top:99.84px;font-size:12px;color:#000000;letter-spacing:-0.052px;">Add Constraint...</span>
<span class="t" style="left:43.10px;top:121.84px;font-size:12px;color:#000000;letter-spacing:0.012px;">Point At...</span>
<div class="a" style="left:39px;top:142px;width:263px;height:1px;background:#d7d7d7;"></div>
<span class="t" style="left:43.10px;top:150.84px;font-size:12px;color:#6d6d6d;letter-spacing:-0.186px;">Replace Body Part with Prop</span>
<span class="t" style="left:43.10px;top:172.84px;font-size:12px;color:#000000;letter-spacing:-0.111px;">Load Morph Target...</span>
<span class="t" style="left:43.10px;top:194.84px;font-size:12px;color:#000000;letter-spacing:-0.073px;">Copy Morphs From...</span>
<span class="t" style="left:43.10px;top:216.84px;font-size:12px;color:#000000;letter-spacing:-0.134px;">Spawn Morph Target...</span>
<span class="t" style="left:43.10px;top:238.84px;font-size:12px;color:#000000;letter-spacing:-0.027px;">Spawn Prop from Convex Hull</span>
<span class="t" style="left:43.10px;top:260.84px;font-size:12px;color:#000000;letter-spacing:-0.242px;">Reduce Polygons...</span>
<span class="t" style="left:43.10px;top:282.84px;font-size:12px;color:#6d6d6d;letter-spacing:-0.019px;">Convert Prop to Control Handle...</span>
<div class="a" style="left:39px;top:303px;width:263px;height:1px;background:#d7d7d7;"></div>
<span class="t" style="left:43.10px;top:311.84px;font-size:12px;color:#000000;letter-spacing:-0.141px;">Create Grouping</span>
<span class="t" style="left:43.10px;top:333.84px;font-size:12px;color:#000000;letter-spacing:-0.098px;">Create Light</span>
<svg class="a" style="left:286px;top:334px;" width="10" height="12" viewBox="0 0 10 12"><polyline points="2.6,2 6.6,6 2.6,10" fill="none" stroke="#333" stroke-width="1.1"/></svg>
<span class="t" style="left:43.10px;top:355.84px;font-size:12px;color:#000000;letter-spacing:-0.333px;">Create Camera</span>
<svg class="a" style="left:286px;top:356px;" width="10" height="12" viewBox="0 0 10 12"><polyline points="2.6,2 6.6,6 2.6,10" fill="none" stroke="#333" stroke-width="1.1"/></svg>
<span class="t" style="left:43.10px;top:377.84px;font-size:12px;color:#000000;letter-spacing:-0.129px;">Create Magnet</span>
<div class="a" style="left:11px;top:394.8px;width:291px;height:22.1px;background:#91c9f7;"></div>
<span class="t" style="left:43.10px;top:399.84px;font-size:12px;color:#000000;letter-spacing:-0.316px;">Create Wave</span>
<span class="t" style="left:43.10px;top:421.84px;font-size:12px;color:#000000;letter-spacing:-0.212px;">Create Wind Force</span>
<span class="t" style="left:43.10px;top:443.84px;font-size:12px;color:#000000;letter-spacing:-0.280px;">Create Text Prop...</span>
<span class="t" style="left:43.10px;top:465.84px;font-size:12px;color:#000000;letter-spacing:-0.179px;">Create Measurement</span>
<svg class="a" style="left:286px;top:466px;" width="10" height="12" viewBox="0 0 10 12"><polyline points="2.6,2 6.6,6 2.6,10" fill="none" stroke="#333" stroke-width="1.1"/></svg>
<div class="a" style="left:39px;top:486px;width:263px;height:1px;background:#d7d7d7;"></div>
<span class="t" style="left:43.10px;top:494.84px;font-size:12px;color:#000000;letter-spacing:-0.139px;">Delete Object</span>
<div class="a" style="left:39px;top:515px;width:263px;height:1px;background:#d7d7d7;"></div>
<span class="t" style="left:43.10px;top:523.84px;font-size:12px;color:#6d6d6d;letter-spacing:-0.191px;">Export Object Mesh To GoZ...</span>
<svg class="a" style="left:209px;top:396px;" width="14" height="22" viewBox="0 0 14 22"><path d="M1.5 1.5 V17.2 L5.2 13.8 L7.9 19.8 L10.3 18.7 L7.7 12.9 H12.5 Z" fill="#fff" stroke="#000" stroke-width="1" stroke-linejoin="miter"/></svg>
</body></html>
